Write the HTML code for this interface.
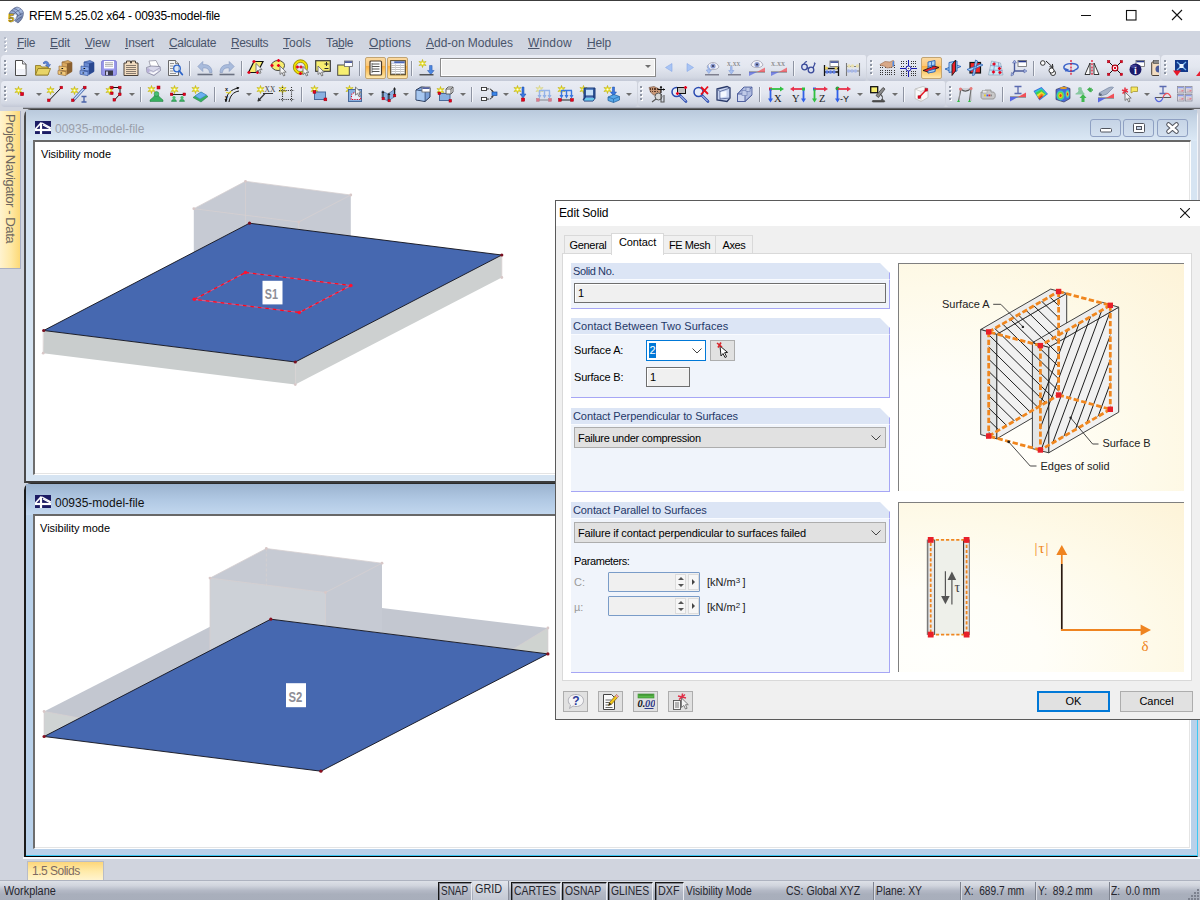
<!DOCTYPE html>
<html lang="en">
<head>
<meta charset="utf-8">
<title>RFEM 5.25.02 x64 - 00935-model-file</title>
<style>
*{box-sizing:border-box;margin:0;padding:0}
html,body{width:1200px;height:900px;overflow:hidden}
body{position:relative;background:#d0d4de;font-family:"Liberation Sans",sans-serif;font-size:12px;color:#000}
.abs{position:absolute}
#topline{left:0;top:0;width:1200px;height:1px;background:#3c3c3c}
#titlebar{left:0;top:1px;width:1200px;height:30px;background:#fff}
#titletext{left:29px;top:8px;font-size:12px;line-height:14px;white-space:nowrap;color:#000;letter-spacing:-.26px}
#menubar{left:0;top:31px;width:1200px;height:24px;background:#d0d5e0}
.mi{position:absolute;top:5px;font-size:12px;line-height:14px;color:#49546a;white-space:nowrap}
.mi u{text-decoration:underline;text-underline-offset:1px}
.tb{position:absolute;height:26px;border-radius:4px 2px 2px 4px;background:linear-gradient(#e9ecf4 0,#e3e7f0 45%,#d3d8e3 85%,#c3c8d6 100%)}
.grip{position:absolute;width:3px}
.grip i{display:block;width:2px;height:2px;background:#8e95a3;margin-bottom:2px;box-shadow:1px 1px 0 #fff}
#mdi{left:0;top:107px;width:1200px;height:750px;background:#d0d4de}
#mditop{left:23px;top:107px;width:1177px;height:2px;background:linear-gradient(#aeb2bd 0,#aeb2bd 50%,#626468 50%,#626468 100%)}
#sidetab{left:0;top:111px;width:21px;height:158px;background:linear-gradient(90deg,#fff3cf,#ffe9a6 55%,#fdd977);border-right:1px solid #aab0c4;border-bottom:1px solid #aab0c4}
#sidetab span{position:absolute;left:17px;top:3px;transform-origin:0 0;transform:rotate(90deg);white-space:nowrap;font-size:13.2px;line-height:14px;color:#6d6660;letter-spacing:-.48px}
.win{position:absolute}
.win .cap{position:absolute;left:0;top:0;right:0;height:31px}
.win .wtitle{position:absolute;left:29px;top:12px;font-size:12px;line-height:14px;white-space:nowrap}
.win .client{position:absolute;background:#fff;border-left:2px solid #6e6e6e;border-top:2px solid #686868;border-right:1px solid #fff;border-bottom:1px solid #fff;overflow:hidden}
.win .client:after{content:"";position:absolute;right:0;bottom:0;left:0;top:0;border-right:1px solid #e4e4e4;border-bottom:1px solid #e4e4e4;pointer-events:none}
.cbtn{position:absolute;top:9px;width:31px;height:18px;border:1px solid #8fa0c2;border-radius:3px;background:linear-gradient(#c6d4e6,#d3e0ef)}
.vis{position:absolute;font-size:11px;line-height:12px;white-space:nowrap;color:#000}
#statusbar{left:0;top:880px;width:1200px;height:20px;background:linear-gradient(#dde0e7 0,#d0d4dd 25%,#b4b9c6 50%,#a9afbc 70%,#a8aebb 100%);border-top:1px solid #aeb3c0}
.st{position:absolute;top:885px;font-size:12px;line-height:13px;white-space:nowrap;color:#222}
.sbtn{position:absolute;top:882px;height:18px;border:1px solid #333;font-size:12px;line-height:15px;padding:0 2px;white-space:nowrap;color:#222;background:linear-gradient(#e4e7ed,#b5bac6)}
#btab{left:27px;top:861px;width:77px;height:19px;background:linear-gradient(#fdd67a,#ffeaa8 50%,#fff4cf);border:1px solid #b8bcc8;border-bottom:none}
#btab span{position:absolute;left:4px;top:2px;font-size:12px;line-height:14px;letter-spacing:-.5px;color:#7d6a62;white-space:nowrap}
/* dialog */
#dlg{left:555px;top:200px;width:660px;height:520px;background:#f0f0f0;border:1px solid #5a5a5a;font-size:11px}
#dlg .dtitle{position:absolute;left:0;top:0;width:100%;height:25px;background:#fff}
#dlg .dtitle span{position:absolute;left:3px;top:5px;font-size:12px;line-height:14px;letter-spacing:-.15px}
.tab{position:absolute;top:34px;height:19px;border:1px solid #d9d9d9;border-bottom:none;background:#f0f0f0;font-size:11px;line-height:18px;text-align:center;white-space:nowrap}
.tab.act{top:32px;height:22px;background:#fff;z-index:2;line-height:17px}
#tabpanel{position:absolute;left:6px;top:52px;width:630px;height:428px;background:#fff;border:1px solid #d9d9d9}
.grp{position:absolute;left:16px;width:319px}
.grp .gb{position:absolute;left:0;top:16px;right:0;bottom:0;background:#f0f4fb;border-right:1px solid #a6a6f5;border-bottom:1px solid #a6a6f5;border-top:1px solid #f9fbff}
.grp .gh{position:absolute;left:0;top:0;width:319px;height:16px;background:#dce5f5;clip-path:polygon(0 0,309px 0,319px 10px,319px 16px,0 16px);border-right:1px solid #a6a6f5}
.grp .gh span{position:absolute;left:2px;top:2px;font-size:11px;line-height:12px;color:#1f3868;white-space:nowrap}
.lbl{position:absolute;font-size:11px;line-height:12px;white-space:nowrap;color:#000}
.inp{position:absolute;border:1px solid #6e6e6e;background:#f0f0f0;font-size:11px;line-height:18px;padding-left:3px;box-shadow:inset 1px 1px 0 #fff}
.combo{position:absolute;border:1px solid #adadad;background:#e1e1e1;font-size:11px;line-height:17px;padding-left:3px;white-space:nowrap}
.btn{position:absolute;border:1px solid #adadad;background:#e1e1e1;font-size:12px;text-align:center}
.pic{position:absolute;border-left:1px solid #7f7f7f;border-top:1px solid #7f7f7f;overflow:hidden;background:radial-gradient(ellipse 125% 125% at 12% 88%,#fffffc 0,#fffef8 30%,#fefae9 62%,#fdf3d8 100%)}
.spin{position:absolute;width:92px;height:20px;border:1px solid #7a9cc8;background:#f0f0f0;border-radius:1px}
.spin .ud{position:absolute;left:66px;top:1px;width:11px;height:16px;background:#f6f6f6;border:1px solid #dcdcdc}
.spin .ud:before{content:"";position:absolute;left:2px;top:2px;border:3px solid transparent;border-top:none;border-bottom:3.5px solid #555}
.spin .ud:after{content:"";position:absolute;left:2px;top:9px;border:3px solid transparent;border-bottom:none;border-top:3.5px solid #555}
.spin .rt{position:absolute;left:79px;top:1px;width:11px;height:16px;background:#f6f6f6;border:1px solid #dcdcdc}
.spin .rt:before{content:"";position:absolute;left:3px;top:4px;border:3px solid transparent;border-right:none;border-left:3.5px solid #444}
sup{font-size:8px;line-height:0;vertical-align:3px}
.ic{position:absolute;overflow:visible}
.sep{position:absolute;width:2px;height:15px;border-left:1px solid #8e94a2;border-right:1px solid #f4f6fa}
.dd{position:absolute;width:0;height:0;border:3.500px solid transparent;border-top:3.500px solid #6e6e6e;border-bottom:none}
.hot{position:absolute;border:1px solid #c2a472;border-radius:2px;background:linear-gradient(#fbd9a0 0,#fcc878 38%,#fbb040 42%,#fdd98a 85%,#fee8b0 100%)}
.tbcombo{position:absolute;border:1px solid #8a8a8a;background:#f0f0f0;box-shadow:inset 0 0 0 1px #fff}
.stx{position:absolute;top:885px;font-size:12px;line-height:13px;white-space:pre;color:#26262e;transform-origin:0 0}
.sb{position:absolute;top:882px;height:18px;border-left:1px solid #161616;border-top:1px solid #161616;box-shadow:inset 1px 1px 0 rgba(40,40,50,.45);border-right:1px solid #e8eaf0;background:linear-gradient(#d2d6df,#b4b9c6 55%,#aab0bd)}
.sb span{position:absolute;left:2px;top:2px;font-size:12px;line-height:13px;white-space:pre;color:#26262e;transform-origin:0 0}
.ssep{position:absolute;top:882px;width:2px;height:18px;border-left:1px solid #7e838f;border-right:1px solid #d8dbe3}
.mg i{background:#b4bac8;box-shadow:1px 1px 0 #fff}
</style>
</head>
<body>
<div id="topline" class="abs"></div>
<div id="titlebar" class="abs">
  <svg class="abs" style="left:6px;top:5px" width="20" height="20" viewBox="6 6 20 20"><defs><linearGradient id="gsh" x1="0" y1="0" x2="1" y2="1"><stop offset="0" stop-color="#6a7aa8"/><stop offset=".45" stop-color="#b4c8ec"/><stop offset="1" stop-color="#4a5a88"/></linearGradient></defs><path d="M9 13.500c2-3.500 5-6 8-6.500 3 .5 5.500 2.500 6.500 5.500 0 4.500-2 8-5.500 10.500l-3.500-2.500c2.500-2 3-4 2.500-6.500z" fill="url(#gsh)" stroke="#4a587e" stroke-width=".6"/><path d="M11.500 10.500c3 .5 5.500 2.500 6.500 5.500M14 8.500c3 .8 5.800 3 6.800 6.500M12.500 15c2-2 4.500-4 8-5.500M15.500 18c1.800-1.800 4-3.500 7-4.500M15.500 21c1.800-1.800 4-3.300 6.500-4.300" fill="none" stroke="#3a4870" stroke-width=".7" opacity=".8"/><text x="8.200" y="22.300" font-family="Liberation Sans,sans-serif" font-weight="bold" font-size="11" fill="#f2c81c" stroke="#6a5608" stroke-width=".5">5</text></svg><svg class="abs" style="left:1076px;top:5px" width="112" height="20" viewBox="1076 6 112 20"><path d="M1081 15.500h10" stroke="#111" stroke-width="1"/><rect x="1126.500" y="10.500" width="9.500" height="9.500" fill="none" stroke="#111" stroke-width="1.100"/><path d="M1172 10l10 10M1182 10l-10 10" stroke="#111" stroke-width="1.100"/></svg><div id="titletext" class="abs">RFEM 5.25.02 x64 - 00935-model-file</div>
</div>
<div id="menubar" class="abs">
  <div class="grip mg" style="left:4px;top:6px"><i></i><i></i><i></i><i></i></div>
  <div class="mi" style="left:17px;letter-spacing:-0.3px"><u>F</u>ile</div>
  <div class="mi" style="left:50px;letter-spacing:-0.17px"><u>E</u>dit</div>
  <div class="mi" style="left:85px;letter-spacing:-0.2px"><u>V</u>iew</div>
  <div class="mi" style="left:125px;letter-spacing:-0.17px"><u>I</u>nsert</div>
  <div class="mi" style="left:169px;letter-spacing:-0.33px"><u>C</u>alculate</div>
  <div class="mi" style="left:231px;letter-spacing:-0.43px"><u>R</u>esults</div>
  <div class="mi" style="left:283px;letter-spacing:0px"><u>T</u>ools</div>
  <div class="mi" style="left:326px;letter-spacing:-0.33px">Ta<u>b</u>le</div>
  <div class="mi" style="left:369px;letter-spacing:0.09px"><u>O</u>ptions</div>
  <div class="mi" style="left:426px;letter-spacing:-0.03px"><u>A</u>dd-on Modules</div>
  <div class="mi" style="left:528px;letter-spacing:0.2px"><u>W</u>indow</div>
  <div class="mi" style="left:587px;letter-spacing:-0.17px"><u>H</u>elp</div>
</div>
<!--TB-->
<div class="tb" style="left:1px;top:55px;width:865px"></div>
<div class="tb" style="left:867px;top:55px;width:293px"></div>
<div class="tb" style="left:1161px;top:55px;width:60px"></div>
<div class="tb" style="left:1px;top:81px;width:636px"></div>
<div class="tb" style="left:638px;top:81px;width:307px"></div>
<div class="tb" style="left:946px;top:81px;width:260px"></div>
<div class="grip" style="left:4px;top:60px"><i></i><i></i><i></i><i></i></div>
<div class="grip" style="left:870px;top:60px"><i></i><i></i><i></i><i></i></div>
<div class="grip" style="left:1164px;top:60px"><i></i><i></i><i></i><i></i></div>
<div class="grip" style="left:4px;top:86px"><i></i><i></i><i></i><i></i></div>
<div class="grip" style="left:640px;top:86px"><i></i><i></i><i></i><i></i></div>
<div class="grip" style="left:949px;top:86px"><i></i><i></i><i></i><i></i></div>
<svg class="ic" style="left:13px;top:60px" width="17" height="17" viewBox="0 0 17 17"><path d="M2.500 .5h7l3.500 3.500v11.500h-10.500z" fill="#fff" stroke="#4a4a4a" stroke-width="1"/><path d="M9.500 .5v3.500h3.500" fill="#e8e8f0" stroke="#4a4a4a" stroke-width=".8"/><path d="M3.500 9v6h9v-6z" fill="#eceef6" opacity=".7"/></svg>
<svg class="ic" style="left:35px;top:60px" width="17" height="17" viewBox="0 0 17 17"><path d="M8 3c2-3 6-2 6 2l1.500-.5-2.500 3.500-2.500-3 1.500 0c0-2-2-2.500-3-1z" fill="#5a86d8" stroke="#2a4a9a" stroke-width=".5"/><path d="M.5 5.500h5l1 1.500h6.500v8h-12.500z" fill="#d9c24a" stroke="#8a7420" stroke-width=".8"/><path d="M.5 15l2.500-6.500h12.500l-2.500 6.500z" fill="#e8d466" stroke="#8a7420" stroke-width=".8"/></svg>
<svg class="ic" style="left:57px;top:60px" width="17" height="17" viewBox="0 0 17 17"><path d="M5 2l6-1.500 4 2v9l-5 3-5-2z" fill="#d9a860" stroke="#8a6030" stroke-width=".6"/><path d="M5 2l5 1.500 5-1" fill="none" stroke="#8a6030" stroke-width=".5"/><path d="M10 3.500l5-1v9l-5 3z" fill="#8a6030"/><path d="M2 6l8 1v4l-8-1z" fill="#f2c878" stroke="#8a6030" stroke-width=".6"/><path d="M1 10.500l8 1.200v4l-8-1.500z" fill="#f2c878" stroke="#8a6030" stroke-width=".6"/><rect x="4.500" y="8" width="1.600" height="1" fill="#111"/><rect x="3.500" y="12.500" width="1.600" height="1" fill="#111"/></svg>
<svg class="ic" style="left:79px;top:60px" width="17" height="17" viewBox="0 0 17 17"><path d="M5 2l6-1.500 4 2v9l-5 3-5-2z" fill="#6a8ad0" stroke="#2a4890" stroke-width=".6"/><path d="M5 2l5 1.500 5-1" fill="none" stroke="#2a4890" stroke-width=".5"/><path d="M10 3.500l5-1v9l-5 3z" fill="#2a4890"/><path d="M2 6l8 1v4l-8-1z" fill="#88a8e8" stroke="#2a4890" stroke-width=".6"/><path d="M1 10.500l8 1.200v4l-8-1.500z" fill="#88a8e8" stroke="#2a4890" stroke-width=".6"/><rect x="4.500" y="8" width="1.600" height="1" fill="#111"/><rect x="3.500" y="12.500" width="1.600" height="1" fill="#111"/></svg>
<svg class="ic" style="left:101px;top:60px" width="17" height="17" viewBox="0 0 17 17"><rect x=".7" y=".7" width="14.600" height="14.600" rx="1.200" fill="#9a9aec" stroke="#7a7ad0" stroke-width="1"/><rect x="3" y="1" width="10" height="7.500" fill="#fff"/><path d="M4 2.800h8M4 4.500h8M4 6.200h8" stroke="#9a9a9a" stroke-width=".8"/><rect x="4" y="10.500" width="8" height="5" fill="#3a3a4a"/><rect x="5" y="11.500" width="2" height="3.500" fill="#c8c8e8"/></svg>
<svg class="ic" style="left:123px;top:60px" width="17" height="17" viewBox="0 0 17 17"><path d="M1 3h2.500v-2h4v2h1v-2h4v2h2.500v12.500h-14z" fill="#f2dcc0" stroke="#4a4038" stroke-width="1"/><path d="M3 5.500h10M3 7.500h10M3 9.500h10M3 11.500h10M3 13.500h10" stroke="#6a6058" stroke-width=".8"/></svg>
<svg class="ic" style="left:145px;top:60px" width="17" height="17" viewBox="0 0 17 17"><path d="M4 1l7-.5 3 6-8 1.500z" fill="#fff" stroke="#8a8a9a" stroke-width=".7"/><path d="M1.500 7.500l4.500-1.500 9 .5 .5 4-6.500 5-7-3z" fill="#d8d8ea" stroke="#7a7a92" stroke-width=".7"/><path d="M2 9l6.500 2.500 7-4" fill="none" stroke="#9a9ab4" stroke-width=".7"/><path d="M5.500 12.500l3 1 4-2.500" fill="none" stroke="#fff" stroke-width="1.200"/><ellipse cx="3.200" cy="10.500" rx="1.400" ry="2.200" fill="#b8b0d8"/></svg>
<svg class="ic" style="left:167px;top:60px" width="17" height="17" viewBox="0 0 17 17"><path d="M1.500 .5h7l3 3v12h-10z" fill="#f4f4f4" stroke="#5a5a5a" stroke-width=".9"/><path d="M8.500 .5v3h3" fill="#ddd" stroke="#5a5a5a" stroke-width=".7"/><path d="M3 3.500h4M3 6h3.500M3 8.500h3M3 11h3.500M3 13.500h6" stroke="#8a8a8a" stroke-width=".9"/><circle cx="10" cy="8.500" r="3.300" fill="#cfe0f8" fill-opacity=".75" stroke="#2a62c8" stroke-width="1.300"/><path d="M12.300 11l3 3.500" stroke="#2a62c8" stroke-width="1.800" stroke-linecap="round"/></svg>
<i class="sep" style="left:189px;top:61px"></i>
<svg class="ic" style="left:197px;top:60px" width="17" height="17" viewBox="0 0 17 17"><path d="M.8 6.500l5-5v3.200c5.500-.8 9.200 2.300 9.200 7.800h-2.500c-.3-3.500-2.700-5-6.700-4.500v3.500z" fill="#a8bbdc" stroke="#8497bd" stroke-width=".6"/><path d="M.5 14.500h15" stroke="#6a7080" stroke-width="1.600"/></svg>
<svg class="ic" style="left:219px;top:60px" width="17" height="17" viewBox="0 0 17 17"><path d="M15.200 6.500l-5-5v3.200c-5.500-.8-9.200 2.300-9.200 7.800h2.500c.3-3.500 2.700-5 6.700-4.500v3.500z" fill="#a8bbdc" stroke="#8497bd" stroke-width=".6"/><path d="M.5 14.500h15" stroke="#6a7080" stroke-width="1.600"/></svg>
<i class="sep" style="left:241px;top:61px"></i>
<svg class="ic" style="left:248px;top:60px" width="17" height="17" viewBox="0 0 17 17"><path d="M6 1.500h9l-5.500 11h-9z" fill="#f7ee70" stroke="#111" stroke-width="1.200"/><path d="M4.4 1.5h3.200M6 -0.10000000000000009v3.200" stroke="#e8001c" stroke-width="1.400"/><path d="M-0.6000000000000001 12.5h3.200M1 10.9v3.200" stroke="#e8001c" stroke-width="1.400"/><path d="M7.9 12.5h3.200M9.5 10.9v3.200" stroke="#e8001c" stroke-width="1.400"/><polygon points="8.0,3.5 8.0,12.0 10.1,10.1 11.6,13.5 13.0,12.8 11.6,9.6 14.2,9.6" fill="#f4f4f4" stroke="#707070" stroke-width=".9" stroke-linejoin="round"/></svg>
<svg class="ic" style="left:271px;top:60px" width="17" height="17" viewBox="0 0 17 17"><ellipse cx="7" cy="5.500" rx="6.500" ry="5" fill="#f7ee70" stroke="#333" stroke-width=".9"/><path d="M5.9 0.5h3.200M7.5 -1.1v3.200" stroke="#e8001c" stroke-width="1.400"/><path d="M-0.6000000000000001 5.5h3.200M1 3.9v3.200" stroke="#e8001c" stroke-width="1.400"/><path d="M5.9 5.5h3.200M7.5 3.9v3.200" stroke="#e8001c" stroke-width="1.400"/><polygon points="9.0,6.0 9.0,14.5 11.1,12.6 12.6,16.0 14.0,15.3 12.6,12.1 15.2,12.1" fill="#f4f4f4" stroke="#707070" stroke-width=".9" stroke-linejoin="round"/></svg>
<svg class="ic" style="left:293px;top:60px" width="17" height="17" viewBox="0 0 17 17"><circle cx="7.500" cy="7" r="6" fill="none" stroke="#f0e000" stroke-width="2.800"/><circle cx="7.500" cy="7" r="7.200" fill="none" stroke="#6a6000" stroke-width=".6"/><circle cx="7.500" cy="7" r="4.600" fill="none" stroke="#6a6000" stroke-width=".6"/><path d="M2.9 7h3.200M4.5 5.4v3.200" stroke="#e8001c" stroke-width="1.400"/><path d="M6.4 7h3.200M8 5.4v3.200" stroke="#e8001c" stroke-width="1.400"/><path d="M5.9 13.5h3.200M7.5 11.9v3.200" stroke="#e8001c" stroke-width="1.400"/><polygon points="10.0,6.5 10.0,14.6 12.0,12.8 13.4,16.0 14.8,15.3 13.4,12.3 15.9,12.3" fill="#f4f4f4" stroke="#707070" stroke-width=".9" stroke-linejoin="round"/></svg>
<svg class="ic" style="left:315px;top:60px" width="17" height="17" viewBox="0 0 17 17"><rect x=".7" y=".7" width="14.600" height="10.600" fill="#f7ee70" stroke="#3a3a3a" stroke-width="1.200"/><path d="M9.500 4h4M11.500 2v4M9.500 8.500h4" stroke="#2a2a2a" stroke-width="1"/><polygon points="3.0,6.0 3.0,14.5 5.1,12.6 6.6,16.0 8.0,15.3 6.6,12.1 9.2,12.1" fill="#f4f4f4" stroke="#707070" stroke-width=".9" stroke-linejoin="round"/></svg>
<svg class="ic" style="left:337px;top:60px" width="17" height="17" viewBox="0 0 17 17"><rect x=".7" y="5" width="11.600" height="10.300" fill="#f7ee70" stroke="#4a4a4a" stroke-width="1"/><rect x="7.5" y="1" width="8" height="5.5" fill="#fff" stroke="#6a6a6a" stroke-width=".8"/><rect x="7.9" y="1.4" width="7.2" height="1.4" fill="#26388a"/></svg>
<i class="sep" style="left:359px;top:61px"></i>
<i class="hot" style="left:365px;top:57px;width:21px;height:22px"></i>
<i class="hot" style="left:387px;top:57px;width:21px;height:22px"></i>
<svg class="ic" style="left:369px;top:60px" width="17" height="17" viewBox="0 0 17 17"><rect x="1" y="1" width="11.500" height="14" rx="1" fill="#fff" stroke="#4a3a2a" stroke-width="1.200"/><path d="M3 4h7.500M3 6.500h7.500M3 9h7.500M3 11.500h7.500" stroke="#555" stroke-width="1"/><path d="M3 3v10" stroke="#555" stroke-width=".8"/></svg>
<svg class="ic" style="left:390px;top:60px" width="17" height="17" viewBox="0 0 17 17"><rect x=".7" y=".7" width="14.600" height="14" fill="#fff" stroke="#5a4a2a" stroke-width="1.200"/><rect x="1.300" y="1.300" width="13.400" height="2" fill="#4a68b8"/><rect x="1.300" y="1.300" width="3" height="1.500" fill="#fff"/><path d="M1 5.500h14M1 7.500h14M1 9.500h14M1 11.500h14M1 13.500h14" stroke="#b0b0b0" stroke-width=".8"/><path d="M5.500 3.500v11M10.500 3.500v11" stroke="#d0d0d0" stroke-width=".8"/></svg>
<i class="sep" style="left:411px;top:61px"></i>
<svg class="ic" style="left:419px;top:60px" width="17" height="17" viewBox="0 0 17 17"><polygon points="3.5,-0.5 4.3,2.1 7.0,1.5 5.1,3.5 7.0,5.5 4.3,4.9 3.5,7.5 2.7,4.9 0.0,5.5 1.9,3.5 0.0,1.5 2.7,2.1" fill="#f7f22a" stroke="#b9a800" stroke-width=".6"/><circle cx="3.5" cy="3.5" r="1.1" fill="#fffde0"/><path d="M10.500 5.500h2.600v5h2l-3.300 4-3.300-4h2z" fill="#4a86e0" stroke="#2a56b0" stroke-width=".5"/><path d="M.5 14.800h14" stroke="#333" stroke-width="1.200"/></svg>
<div class="tbcombo" style="left:440px;top:58px;width:216px;height:19px"><i class="dd" style="left:204px;top:6px"></i></div>
<svg class="ic" style="left:665px;top:63px" width="9" height="10" viewBox="0 0 9 10"><path d="M7 .5v8l-6.500-4z" fill="#a8c4f4" stroke="#88a8e8" stroke-width=".6"/></svg>
<svg class="ic" style="left:686px;top:63px" width="9" height="10" viewBox="0 0 9 10"><path d="M1 .5v8l6.500-4z" fill="#a8c4f4" stroke="#88a8e8" stroke-width=".6"/></svg>
<svg class="ic" style="left:704px;top:60px" width="17" height="17" viewBox="0 0 17 17"><path d="M3 7c2-6 10-6 12 0-2 3.500-10 3.500-12 0z" fill="#f4f4fa" stroke="#a0a0b0" stroke-width=".8"/><circle cx="9" cy="6" r="2.600" fill="#8a9ad0"/><circle cx="9" cy="6" r="1.100" fill="#3a3a5a"/><path d="M4 5v5h-1.800l2.600 3.500 2.600-3.500h-1.800v-2" fill="#a8c0f0" stroke="#7a98d8" stroke-width=".5"/><path d="M1 14.800h14" stroke="#6a6a7a" stroke-width="1.200"/></svg>
<svg class="ic" style="left:727px;top:60px" width="17" height="17" viewBox="0 0 17 17"><text x="0" y="5.500" font-family="Liberation Serif,serif" font-size="7.500" fill="#777">x.xx</text><path d="M3.500 6.500v4h-1.800l2.600 3.500 2.600-3.500h-1.800v-4z" fill="#a8c0f0" stroke="#7a98d8" stroke-width=".5"/><path d="M1 14.800h13" stroke="#6a6a7a" stroke-width="1.200"/></svg>
<svg class="ic" style="left:749px;top:60px" width="17" height="17" viewBox="0 0 17 17"><path d="M2 5c2-6 10-6 12 0-2 3.500-10 3.500-12 0z" fill="#f4f4fa" stroke="#a0a0b0" stroke-width=".8"/><circle cx="8" cy="4.500" r="2.600" fill="#8a9ad0"/><circle cx="8" cy="4.500" r="1.100" fill="#3a3a5a"/><path d="M0 12h16" stroke="#666" stroke-width="1"/><path d="M8 12l8-4.500v4.500z" fill="#f05058" opacity=".75"/><path d="M8 12l-8 4v-4z" fill="#5868e0" opacity=".75"/></svg>
<svg class="ic" style="left:771px;top:60px" width="17" height="17" viewBox="0 0 17 17"><text x="0" y="6" font-family="Liberation Serif,serif" font-size="8" fill="#777">x.xx</text><path d="M0 12h16" stroke="#666" stroke-width="1"/><path d="M8 12l8-4.500v4.500z" fill="#f05058" opacity=".75"/><path d="M8 12l-8 4v-4z" fill="#5868e0" opacity=".75"/></svg>
<i class="sep" style="left:793px;top:61px"></i>
<svg class="ic" style="left:801px;top:60px" width="17" height="17" viewBox="0 0 17 17"><circle cx="3.500" cy="7" r="2.800" fill="#d8e0f4" fill-opacity=".6" stroke="#3a4a9a" stroke-width="1.300"/><circle cx="10" cy="10" r="2.800" fill="#d8e0f4" fill-opacity=".6" stroke="#3a4a9a" stroke-width="1.300"/><path d="M6 7.500l1.500 1.200M2.500 4.500l2-2.500 1.500-.5M12 8l2-4.500-1-.8" fill="none" stroke="#3a4a9a" stroke-width="1.200"/></svg>
<svg class="ic" style="left:823px;top:60px" width="17" height="17" viewBox="0 0 17 17"><path d="M1.500 5v11M15.500 6v10M1.500 8.500h14M1.500 12h14" stroke="#111" stroke-width="1.300" fill="none"/><circle cx="3.500" cy="8" r="1.600" fill="#e8d060"/><circle cx="4" cy="12" r="1.700" fill="#5a7ae0"/><circle cx="7.500" cy="12" r="1.700" fill="#5a7ae0"/><circle cx="11" cy="12" r="1.700" fill="#5a7ae0"/><circle cx="13" cy="8" r="1.500" fill="#e8d060"/><rect x="7" y="1" width="8.5" height="5.5" fill="#fff" stroke="#6a6a6a" stroke-width=".8"/><rect x="7.4" y="1.4" width="7.7" height="1.4" fill="#26388a"/></svg>
<svg class="ic" style="left:845px;top:60px" width="17" height="17" viewBox="0 0 17 17"><path d="M1.500 3v13M14.500 3v13M1.500 6.500h13M1.500 11h13" stroke="#7a7a7a" stroke-width="1.100" fill="none"/><circle cx="4" cy="6" r="1.700" fill="#e8e0b0"/><circle cx="7.500" cy="6" r="1.700" fill="#e8e0b0"/><circle cx="12.500" cy="6" r="1.700" fill="#e8e0b0"/><circle cx="3.500" cy="11" r="1.800" fill="#a8b8e8"/><circle cx="7" cy="11" r="1.800" fill="#a8b8e8"/><circle cx="10.500" cy="11" r="1.800" fill="#a8b8e8"/></svg>
<svg class="ic" style="left:879px;top:60px" width="17" height="17" viewBox="0 0 17 17"><rect x="1" y="5" width="1" height="1" fill="#333"/><rect x="1" y="7" width="1" height="1" fill="#333"/><rect x="1" y="10" width="1" height="1" fill="#333"/><rect x="1" y="12" width="1" height="1" fill="#333"/><rect x="1" y="14" width="1" height="1" fill="#333"/><rect x="3" y="5" width="1" height="1" fill="#333"/><rect x="3" y="7" width="1" height="1" fill="#333"/><rect x="3" y="10" width="1" height="1" fill="#333"/><rect x="3" y="12" width="1" height="1" fill="#333"/><rect x="3" y="14" width="1" height="1" fill="#333"/><rect x="6" y="5" width="1" height="1" fill="#333"/><rect x="6" y="7" width="1" height="1" fill="#333"/><rect x="6" y="10" width="1" height="1" fill="#333"/><rect x="6" y="12" width="1" height="1" fill="#333"/><rect x="6" y="14" width="1" height="1" fill="#333"/><rect x="8" y="5" width="1" height="1" fill="#333"/><rect x="8" y="7" width="1" height="1" fill="#333"/><rect x="8" y="10" width="1" height="1" fill="#333"/><rect x="8" y="12" width="1" height="1" fill="#333"/><rect x="8" y="14" width="1" height="1" fill="#333"/><rect x="10" y="5" width="1" height="1" fill="#333"/><rect x="10" y="7" width="1" height="1" fill="#333"/><rect x="10" y="10" width="1" height="1" fill="#333"/><rect x="10" y="12" width="1" height="1" fill="#333"/><rect x="10" y="14" width="1" height="1" fill="#333"/><rect x="12" y="5" width="1" height="1" fill="#333"/><rect x="12" y="7" width="1" height="1" fill="#333"/><rect x="12" y="10" width="1" height="1" fill="#333"/><rect x="12" y="12" width="1" height="1" fill="#333"/><rect x="12" y="14" width="1" height="1" fill="#333"/><rect x="15" y="5" width="1" height="1" fill="#333"/><rect x="15" y="7" width="1" height="1" fill="#333"/><rect x="15" y="10" width="1" height="1" fill="#333"/><rect x="15" y="12" width="1" height="1" fill="#333"/><rect x="15" y="14" width="1" height="1" fill="#333"/><path d="M1 4.500l5-3 5 .5 3-1.500 1 .5v5l-3 1.500-4 .5-3-2-3.500-.5z" fill="#d8a888" stroke="#9a6a4a" stroke-width=".6"/><path d="M13.500 1.500l1.500-.5v5l-1.500 .8z" fill="#4a8ae8"/></svg>
<svg class="ic" style="left:900px;top:60px" width="17" height="17" viewBox="0 0 17 17"><rect x="1" y="1" width="1" height="1" fill="#333"/><rect x="1" y="3" width="1" height="1" fill="#333"/><rect x="1" y="6" width="1" height="1" fill="#333"/><rect x="1" y="8" width="1" height="1" fill="#333"/><rect x="1" y="11" width="1" height="1" fill="#333"/><rect x="1" y="13" width="1" height="1" fill="#333"/><rect x="1" y="15" width="1" height="1" fill="#333"/><rect x="3" y="1" width="1" height="1" fill="#333"/><rect x="3" y="3" width="1" height="1" fill="#333"/><rect x="3" y="6" width="1" height="1" fill="#333"/><rect x="3" y="8" width="1" height="1" fill="#333"/><rect x="3" y="11" width="1" height="1" fill="#333"/><rect x="3" y="13" width="1" height="1" fill="#333"/><rect x="3" y="15" width="1" height="1" fill="#333"/><rect x="6" y="1" width="1" height="1" fill="#333"/><rect x="6" y="3" width="1" height="1" fill="#333"/><rect x="6" y="6" width="1" height="1" fill="#333"/><rect x="6" y="8" width="1" height="1" fill="#333"/><rect x="6" y="11" width="1" height="1" fill="#333"/><rect x="6" y="13" width="1" height="1" fill="#333"/><rect x="6" y="15" width="1" height="1" fill="#333"/><rect x="8" y="1" width="1" height="1" fill="#333"/><rect x="8" y="3" width="1" height="1" fill="#333"/><rect x="8" y="6" width="1" height="1" fill="#333"/><rect x="8" y="8" width="1" height="1" fill="#333"/><rect x="8" y="11" width="1" height="1" fill="#333"/><rect x="8" y="13" width="1" height="1" fill="#333"/><rect x="8" y="15" width="1" height="1" fill="#333"/><rect x="11" y="1" width="1" height="1" fill="#333"/><rect x="11" y="3" width="1" height="1" fill="#333"/><rect x="11" y="6" width="1" height="1" fill="#333"/><rect x="11" y="8" width="1" height="1" fill="#333"/><rect x="11" y="11" width="1" height="1" fill="#333"/><rect x="11" y="13" width="1" height="1" fill="#333"/><rect x="11" y="15" width="1" height="1" fill="#333"/><rect x="13" y="1" width="1" height="1" fill="#333"/><rect x="13" y="3" width="1" height="1" fill="#333"/><rect x="13" y="6" width="1" height="1" fill="#333"/><rect x="13" y="8" width="1" height="1" fill="#333"/><rect x="13" y="11" width="1" height="1" fill="#333"/><rect x="13" y="13" width="1" height="1" fill="#333"/><rect x="13" y="15" width="1" height="1" fill="#333"/><rect x="15" y="1" width="1" height="1" fill="#333"/><rect x="15" y="3" width="1" height="1" fill="#333"/><rect x="15" y="6" width="1" height="1" fill="#333"/><rect x="15" y="8" width="1" height="1" fill="#333"/><rect x="15" y="11" width="1" height="1" fill="#333"/><rect x="15" y="13" width="1" height="1" fill="#333"/><rect x="15" y="15" width="1" height="1" fill="#333"/><circle cx="8.500" cy="8.500" r="2.500" fill="#fff" stroke="#1a1ab0" stroke-width="1"/><path d="M8.500 0v6M8.500 11v6M0 8.500h6M11 8.500h6" stroke="#1a1ab0" stroke-width="1"/><circle cx="8.500" cy="8.500" r=".8" fill="#555"/></svg>
<i class="hot" style="left:921px;top:57px;width:21px;height:22px"></i>
<svg class="ic" style="left:923px;top:60px" width="17" height="17" viewBox="0 0 17 17"><path d="M5 2l7-1.500v11l-7 1.500z" fill="#a8d4f8" stroke="#2a62b8" stroke-width=".9"/><path d="M0 10.500l11-4.500 5 1.500-11 4.500z" fill="#e8202a" stroke="#111" stroke-width=".8"/><path d="M8.500 1.500v6.500M5 6.500l7-1.500" stroke="#2a62b8" stroke-width=".8"/><path d="M5 13l0-2 7-2v2.500z" fill="#a8d4f8" stroke="#2a62b8" stroke-width=".8"/></svg>
<svg class="ic" style="left:945px;top:60px" width="17" height="17" viewBox="0 0 17 17"><path d="M0 9l11-4 5 1.500-11 4.500z" fill="#a8d4f8" stroke="#2a62b8" stroke-width=".9"/><path d="M4 2.500l8-1.500v10l-8 1.500z" fill="#a8d4f8" stroke="#2a62b8" stroke-width=".9"/><path d="M7 4.500l3.500-4.500v11l-3.500 4.500z" fill="#e8202a" stroke="#111" stroke-width=".8"/></svg>
<svg class="ic" style="left:967px;top:60px" width="17" height="17" viewBox="0 0 17 17"><rect x="3" y="2.500" width="10.500" height="10.500" fill="#f02828" stroke="#111" stroke-width="1.200"/><path d="M0 9.500l14-5.500 2 1-13 6zM8.500 0l2 1-3 14-2 .5z" fill="#a8d4f8" stroke="#2a62b8" stroke-width=".8"/></svg>
<svg class="ic" style="left:988px;top:60px" width="17" height="17" viewBox="0 0 17 17"><path d="M3.500 1l9 2 2.500 12h-14.500z" fill="#c8ecf8" stroke="#8a9ab0" stroke-width=".6"/><path d="M2.500 5.500l11.500 1M1.500 10l13 .5M7 1.800l-2 13.200M10.500 2.500l1 12.500" stroke="#7a8ac0" stroke-width=".7"/><path d="M4.4 4h3.200M6 2.4v3.200" stroke="#e8001c" stroke-width="1.400"/><path d="M3.9 12h3.200M5.5 10.4v3.200" stroke="#e8001c" stroke-width="1.400"/><path d="M9.9 8.5h3.200M11.5 6.9v3.200" stroke="#e8001c" stroke-width="1.400"/><path d="M10.4 12.5h3.200M12 10.9v3.200" stroke="#e8001c" stroke-width="1.400"/></svg>
<svg class="ic" style="left:1011px;top:60px" width="17" height="17" viewBox="0 0 17 17"><path d="M3.500 1v10l-2.500 4M3.500 11l10 0" stroke="#4a5a9a" stroke-width="1.400" fill="none"/><path d="M3.500 0l-2 3h4zM16 11l-3-2v4zM0 16l.5-3.500 2.500 2z" fill="#a8b8e8" stroke="#4a5a9a" stroke-width=".5"/><rect x="7" y="0.5" width="8.5" height="6" fill="#fff" stroke="#6a6a6a" stroke-width=".8"/><rect x="7.4" y="0.9" width="7.7" height="1.4" fill="#26388a"/></svg>
<i class="sep" style="left:1033px;top:61px"></i>
<svg class="ic" style="left:1040px;top:60px" width="17" height="17" viewBox="0 0 17 17"><circle cx="2.800" cy="3" r="2.300" fill="#fff" stroke="#222" stroke-width=".9"/><circle cx="13" cy="13" r="2.500" fill="#fff" stroke="#222" stroke-width=".9"/><circle cx="11.500" cy="10.500" r="2.500" fill="#fff" stroke="#222" stroke-width=".9"/><path d="M6 1l7 6.500M13 7.500l-3.500-.8M13 7.500l-.6-3.500" stroke="#222" stroke-width="1" fill="none"/></svg>
<svg class="ic" style="left:1063px;top:60px" width="17" height="17" viewBox="0 0 17 17"><path d="M12 10.500c-5 2-12 0-11-4 1-3.500 12-4 14-.5 .8 1.800-1 3.500-3.500 4" fill="none" stroke="#3a62c8" stroke-width="1.500"/><path d="M2 8l.5 4 3.500-2.500z" fill="#3a62c8"/><path d="M8 0v16" stroke="#e8001c" stroke-width="1.200" stroke-dasharray="2 1.200"/></svg>
<svg class="ic" style="left:1084px;top:60px" width="17" height="17" viewBox="0 0 17 17"><path d="M6 3v11.500h-5zM10 3v11.500h5z" fill="#fafafa" stroke="#222" stroke-width=".9"/><path d="M8 0v16" stroke="#e8001c" stroke-width="1.200" stroke-dasharray="2 1.200"/></svg>
<svg class="ic" style="left:1107px;top:60px" width="17" height="17" viewBox="0 0 17 17"><path d="M2 2l12 12M14 2l-12 12" stroke="#111" stroke-width="1"/><circle cx="8" cy="8" r="2.800" fill="#fff" stroke="#b00010" stroke-width="1.200"/><circle cx="8" cy="8" r="1.200" fill="#e8001c"/><rect x="0.5" y="0.5" width="2.3" height="2.3" fill="#e8001c" stroke="#9a0010" stroke-width=".5"/><rect x="13.2" y="0.5" width="2.3" height="2.3" fill="#e8001c" stroke="#9a0010" stroke-width=".5"/><rect x="0.5" y="13.2" width="2.3" height="2.3" fill="#e8001c" stroke="#9a0010" stroke-width=".5"/><rect x="13.2" y="13.2" width="2.3" height="2.3" fill="#e8001c" stroke="#9a0010" stroke-width=".5"/></svg>
<svg class="ic" style="left:1129px;top:60px" width="17" height="17" viewBox="0 0 17 17"><rect x="7" y="0.5" width="8.5" height="6" fill="#fff" stroke="#6a6a6a" stroke-width=".8"/><rect x="7.4" y="0.9" width="7.7" height="1.4" fill="#26388a"/><circle cx="6.500" cy="9.500" r="6" fill="#1a1a6a"/><ellipse cx="5" cy="6.500" rx="3" ry="1.800" fill="#5a5ab0" opacity=".6"/><text x="6.500" y="13.500" text-anchor="middle" font-family="Liberation Serif,serif" font-weight="bold" font-size="10" fill="#fff">i</text></svg>
<svg class="ic" style="left:1151px;top:60px;overflow:hidden" width="8" height="17" viewBox="0 0 8 17"><rect x=".7" y="2" width="10" height="13.500" rx="1" fill="#f2dcc0" stroke="#4a4038" stroke-width="1"/><rect x="2.500" y=".5" width="6" height="3" fill="#8a8a8a" stroke="#444" stroke-width=".6"/><circle cx="8" cy="9" r="3.500" fill="#4a5a9a"/></svg>
<svg class="ic" style="left:1173px;top:60px" width="17" height="17" viewBox="0 0 17 17"><rect x="2" y="0" width="13" height="12" fill="#12388a"/><path d="M4 2l9 8M13 2l-9 8" stroke="#7ab8f0" stroke-width="1.300"/><rect x="6.500" y="4" width="4" height="4" fill="#e8f4ff"/><path d="M0 10.500h8l-4 5.500z" fill="#e81828"/></svg>
<i style="position:absolute;left:1196px;top:71px;border:4px solid transparent;border-bottom:5px solid #e82030;border-top:none"></i>
<svg class="ic" style="left:15px;top:87px" width="17" height="17" viewBox="0 0 17 17"><polygon points="3.5,-0.5 4.3,2.1 7.0,1.5 5.1,3.5 7.0,5.5 4.3,4.9 3.5,7.5 2.7,4.9 0.0,5.5 1.9,3.5 0.0,1.5 2.7,2.1" fill="#f7f22a" stroke="#b9a800" stroke-width=".6"/><circle cx="3.5" cy="3.5" r="1.1" fill="#fffde0"/><rect x="5.5" y="5.5" width="3.2" height="3.2" fill="#e8001c" stroke="#9a0010" stroke-width=".5"/></svg>
<i class="dd" style="left:36px;top:93px"></i>
<svg class="ic" style="left:47px;top:86px" width="17" height="17" viewBox="0 0 17 17"><polygon points="3.5,0.5 4.3,3.1 7.0,2.5 5.1,4.5 7.0,6.5 4.3,5.9 3.5,8.5 2.7,5.9 0.0,6.5 1.9,4.5 0.0,2.5 2.7,3.1" fill="#f7f22a" stroke="#b9a800" stroke-width=".6"/><circle cx="3.5" cy="4.5" r="1.1" fill="#fffde0"/><path d="M2 14.500l12.500-13" stroke="#111" stroke-width="1"/><rect x="0.5" y="13" width="2.6" height="2.6" fill="#e8001c" stroke="#9a0010" stroke-width=".5"/><rect x="13" y="0.2" width="2.6" height="2.6" fill="#e8001c" stroke="#9a0010" stroke-width=".5"/></svg>
<svg class="ic" style="left:71px;top:86px" width="17" height="17" viewBox="0 0 17 17"><polygon points="3.5,0.5 4.3,3.1 7.0,2.5 5.1,4.5 7.0,6.5 4.3,5.9 3.5,8.5 2.7,5.9 0.0,6.5 1.9,4.5 0.0,2.5 2.7,3.1" fill="#f7f22a" stroke="#b9a800" stroke-width=".6"/><circle cx="3.5" cy="4.5" r="1.1" fill="#fffde0"/><path d="M2 14.500l12-13" stroke="#3a5aa0" stroke-width="2.600"/><path d="M2 14.500l12-13" stroke="#c8e0ff" stroke-width="1.300"/><rect x="0.5" y="13" width="2.6" height="2.6" fill="#e8001c" stroke="#9a0010" stroke-width=".5"/><rect x="12.5" y="0.2" width="2.6" height="2.6" fill="#e8001c" stroke="#9a0010" stroke-width=".5"/><path d="M10.500 10.500h5M10.500 16h5M13 10.500v5.500" stroke="#4a62a8" stroke-width="1.300"/></svg>
<i class="dd" style="left:94px;top:93px"></i>
<svg class="ic" style="left:106px;top:86px" width="17" height="17" viewBox="0 0 17 17"><polygon points="3.5,0.5 4.3,3.1 7.0,2.5 5.1,4.5 7.0,6.5 4.3,5.9 3.5,8.5 2.7,5.9 0.0,6.5 1.9,4.5 0.0,2.5 2.7,3.1" fill="#f7f22a" stroke="#b9a800" stroke-width=".6"/><circle cx="3.5" cy="4.5" r="1.1" fill="#fffde0"/><path d="M6 1.500h8v6.500l-5.500 6" fill="none" stroke="#111" stroke-width="1"/><rect x="4.5" y="0.2" width="2.6" height="2.6" fill="#e8001c" stroke="#9a0010" stroke-width=".5"/><rect x="12.5" y="0.2" width="2.6" height="2.6" fill="#e8001c" stroke="#9a0010" stroke-width=".5"/><rect x="4.5" y="6" width="2.6" height="2.6" fill="#e8001c" stroke="#9a0010" stroke-width=".5"/><rect x="12.5" y="7" width="2.6" height="2.6" fill="#e8001c" stroke="#9a0010" stroke-width=".5"/><rect x="7" y="12.5" width="2.6" height="2.6" fill="#e8001c" stroke="#9a0010" stroke-width=".5"/></svg>
<i class="dd" style="left:129px;top:93px"></i>
<i class="sep" style="left:140px;top:87px"></i>
<svg class="ic" style="left:148px;top:86px" width="17" height="17" viewBox="0 0 17 17"><polygon points="3.5,-0.5 4.3,2.1 7.0,1.5 5.1,3.5 7.0,5.5 4.3,4.9 3.5,7.5 2.7,4.9 0.0,5.5 1.9,3.5 0.0,1.5 2.7,2.1" fill="#f7f22a" stroke="#b9a800" stroke-width=".6"/><circle cx="3.5" cy="3.5" r="1.1" fill="#fffde0"/><rect x="9" y="0" width="3" height="3" fill="#e8001c" stroke="#9a0010" stroke-width=".5"/><path d="M6 10.500c0-2 5-2 5 0l4 3.500v1.500h-13v-1.500z" fill="#38b060" stroke="#1a7a3a" stroke-width=".5"/><circle cx="8.500" cy="8" r="2.400" fill="#48c070" stroke="#1a7a3a" stroke-width=".5"/></svg>
<svg class="ic" style="left:170px;top:86px" width="17" height="17" viewBox="0 0 17 17"><polygon points="4.5,-0.5 5.3,2.1 8.0,1.5 6.1,3.5 8.0,5.5 5.3,4.9 4.5,7.5 3.7,4.9 1.0,5.5 2.9,3.5 1.0,1.5 3.7,2.1" fill="#f7f22a" stroke="#b9a800" stroke-width=".6"/><circle cx="4.5" cy="3.5" r="1.1" fill="#fffde0"/><path d="M2 8.500h12" stroke="#222" stroke-width="1"/><rect x="0.3" y="7" width="2.6" height="2.6" fill="#e8001c" stroke="#9a0010" stroke-width=".5"/><rect x="13" y="7" width="2.6" height="2.6" fill="#e8001c" stroke="#9a0010" stroke-width=".5"/><circle cx="4" cy="11.500" r="1.600" fill="#48c070"/><circle cx="12" cy="11.500" r="1.600" fill="#48c070"/><path d="M1.500 15.500c0-3 5-3 5 0zM9.500 15.500c0-3 5-3 5 0z" fill="#38b060" stroke="#1a7a3a" stroke-width=".4"/></svg>
<svg class="ic" style="left:192px;top:86px" width="17" height="17" viewBox="0 0 17 17"><polygon points="3.5,-0.5 4.3,2.1 7.0,1.5 5.1,3.5 7.0,5.5 4.3,4.9 3.5,7.5 2.7,4.9 0.0,5.5 1.9,3.5 0.0,1.5 2.7,2.1" fill="#f7f22a" stroke="#b9a800" stroke-width=".6"/><circle cx="3.5" cy="3.5" r="1.1" fill="#fffde0"/><path d="M1 11.500l8-5.500 7 4.500-7 5.500z" fill="#38b060" stroke="#1a7a3a" stroke-width=".5"/><path d="M3 10l6-4 5.500 3-6.500 4z" fill="#6ab0f0" stroke="#3a7ac8" stroke-width=".5"/></svg>
<i class="sep" style="left:214px;top:87px"></i>
<svg class="ic" style="left:224px;top:86px" width="17" height="17" viewBox="0 0 17 17"><path d="M2 16c0-8 5-13 13-14M5 16c1-6 4-10 10-11" fill="none" stroke="#111" stroke-width="1"/><path d="M15.500 1.500l-3-.8 .5 2.800zM1.500 16l-.8-3 2.800 .5z" fill="#111"/><text x="1" y="5" font-family="Liberation Sans,sans-serif" font-weight="bold" font-size="5.500" fill="#111">x</text><text x="1" y="13" font-family="Liberation Sans,sans-serif" font-weight="bold" font-size="5.500" fill="#111">y</text><path d="M2 6.500l4 .5 1-2" stroke="#e8d820" stroke-width="1.200" fill="none"/></svg>
<i class="dd" style="left:246px;top:93px"></i>
<svg class="ic" style="left:257px;top:86px" width="17" height="17" viewBox="0 0 17 17"><polygon points="3.5,-0.5 4.3,2.1 7.0,1.5 5.1,3.5 7.0,5.5 4.3,4.9 3.5,7.5 2.7,4.9 0.0,5.5 1.9,3.5 0.0,1.5 2.7,2.1" fill="#f7f22a" stroke="#b9a800" stroke-width=".6"/><circle cx="3.5" cy="3.5" r="1.1" fill="#fffde0"/><text x="7.500" y="6" font-family="Liberation Serif,serif" font-size="7.500" fill="#444">XX</text><path d="M6 7.500h10M8 7.500l-7 7.500" stroke="#333" stroke-width="1.100" fill="none"/><path d="M.5 15.500l.8-4 3 3z" fill="#333"/></svg>
<svg class="ic" style="left:279px;top:86px" width="17" height="17" viewBox="0 0 17 17"><polygon points="3.5,-0.5 4.3,2.1 7.0,1.5 5.1,3.5 7.0,5.5 4.3,4.9 3.5,7.5 2.7,4.9 0.0,5.5 1.9,3.5 0.0,1.5 2.7,2.1" fill="#f7f22a" stroke="#b9a800" stroke-width=".6"/><circle cx="3.5" cy="3.5" r="1.1" fill="#fffde0"/><path d="M0 4.500h15.500M0 13.500h15.500M3.500 1v15M12.500 1v15" stroke="#333" stroke-width="1.100" stroke-dasharray="1.100 1.100" fill="none"/></svg>
<i class="sep" style="left:301px;top:87px"></i>
<svg class="ic" style="left:311px;top:86px" width="17" height="17" viewBox="0 0 17 17"><polygon points="3.5,-0.5 4.3,2.1 7.0,1.5 5.1,3.5 7.0,5.5 4.3,4.9 3.5,7.5 2.7,4.9 0.0,5.5 1.9,3.5 0.0,1.5 2.7,2.1" fill="#f7f22a" stroke="#b9a800" stroke-width=".6"/><circle cx="3.5" cy="3.5" r="1.1" fill="#fffde0"/><rect x="3.500" y="6" width="11" height="7.500" fill="#8ab0e0" stroke="#4a6a9a" stroke-width="1"/><rect x="2" y="4.5" width="2.8" height="2.8" fill="#e8001c" stroke="#9a0010" stroke-width=".5"/><rect x="13" y="12" width="2.8" height="2.8" fill="#e8001c" stroke="#9a0010" stroke-width=".5"/></svg>
<i class="dd" style="left:333px;top:93px"></i>
<svg class="ic" style="left:346px;top:86px" width="17" height="17" viewBox="0 0 17 17"><polygon points="3.5,-0.5 4.3,2.1 7.0,1.5 5.1,3.5 7.0,5.5 4.3,4.9 3.5,7.5 2.7,4.9 0.0,5.5 1.9,3.5 0.0,1.5 2.7,2.1" fill="#f7f22a" stroke="#b9a800" stroke-width=".6"/><circle cx="3.5" cy="3.5" r="1.1" fill="#fffde0"/><rect x="2.500" y="3.500" width="13" height="12" fill="#8ab0e0" stroke="#4a6a9a" stroke-width="1"/><path d="M5 13.500l1-6 6-2 3 8z" fill="#e8eef8" stroke="#e8001c" stroke-width="1" stroke-dasharray="1.200 1.200"/><polygon points="9.5,1.0 9.5,9.1 11.5,7.3 12.9,10.5 14.3,9.8 12.9,6.8 15.4,6.8" fill="#f4f4f4" stroke="#707070" stroke-width=".9" stroke-linejoin="round"/></svg>
<i class="dd" style="left:368px;top:93px"></i>
<svg class="ic" style="left:381px;top:86px" width="17" height="17" viewBox="0 0 17 17"><path d="M1 5l6 3v7l-6-3zM7 8l7-5v7.500l-7 4.500z" fill="#8ab0e0" stroke="#4a6a9a" stroke-width=".7"/><path d="M2 12.500v-6M8 14.500v-6M13.500 9v-6" stroke="#222" stroke-width="1.100"/><path d="M2 4.500l-1.500 2.500h3zM8 6.500l-1.500 2.500h3zM13.500 1l-1.500 2.500h3z" fill="#222"/><rect x="1" y="11.5" width="2.3" height="2.3" fill="#e8001c" stroke="#9a0010" stroke-width=".5"/><rect x="7" y="13.5" width="2.3" height="2.3" fill="#e8001c" stroke="#9a0010" stroke-width=".5"/><rect x="12.5" y="8.5" width="2.3" height="2.3" fill="#e8001c" stroke="#9a0010" stroke-width=".5"/></svg>
<i class="dd" style="left:403px;top:93px"></i>
<svg class="ic" style="left:415px;top:86px" width="17" height="17" viewBox="0 0 17 17"><path d="M1 4l5-3 9 1v9l-5 4.500-9-1.500z" fill="#7aa0d8" stroke="#2a3a5a" stroke-width="1"/><path d="M1 4l9 1.500 5-3.500M10 5.500v10" fill="none" stroke="#2a3a5a" stroke-width=".8"/><path d="M1.500 4.500l8 1.300v9l-8-1.300z" fill="#a8c8f0"/><rect x="7" y="1" width="8" height="5" fill="#fff" stroke="#6a6a6a" stroke-width=".8"/><rect x="7.4" y="1.4" width="7.2" height="1.4" fill="#26388a"/></svg>
<svg class="ic" style="left:437px;top:86px" width="17" height="17" viewBox="0 0 17 17"><polygon points="3.5,0.5 4.3,3.1 7.0,2.5 5.1,4.5 7.0,6.5 4.3,5.9 3.5,8.5 2.7,5.9 0.0,6.5 1.9,4.5 0.0,2.5 2.7,3.1" fill="#f7f22a" stroke="#b9a800" stroke-width=".6"/><circle cx="3.5" cy="4.5" r="1.1" fill="#fffde0"/><rect x="2.500" y="7.500" width="10.500" height="7" fill="#8ab0e0" stroke="#4a6a9a" stroke-width="1"/><path d="M9 3l2-2h5v5l-2 2h-5zM9 3h5v5M14 3l2-2" fill="#f4f4f4" stroke="#555" stroke-width=".9"/><rect x="1" y="6" width="2.6" height="2.6" fill="#e8001c" stroke="#9a0010" stroke-width=".5"/><rect x="12" y="13.5" width="2.6" height="2.6" fill="#e8001c" stroke="#9a0010" stroke-width=".5"/></svg>
<i class="dd" style="left:460px;top:93px"></i>
<i class="sep" style="left:471px;top:87px"></i>
<svg class="ic" style="left:481px;top:86px" width="17" height="17" viewBox="0 0 17 17"><rect x=".5" y="1.500" width="5" height="3" fill="#fff" stroke="#333" stroke-width=".9"/><rect x=".5" y="11.500" width="5" height="3" fill="#fff" stroke="#333" stroke-width=".9"/><rect x="11" y="6" width="5" height="3.500" fill="#3a86e8" stroke="#1a4a9a" stroke-width=".7"/><path d="M5.500 3c4-.5 6 .5 6.500 3M5.500 13c4 .5 6-.5 6.500-3" fill="none" stroke="#333" stroke-width="1" stroke-dasharray="2 1"/><path d="M12.500 6l-2.500-1 .5-1.500zM12.500 9.500l-2.500 1 .5 1.500z" fill="#333"/></svg>
<i class="dd" style="left:503px;top:93px"></i>
<svg class="ic" style="left:514px;top:86px" width="17" height="17" viewBox="0 0 17 17"><polygon points="3.5,-0.5 4.3,2.1 7.0,1.5 5.1,3.5 7.0,5.5 4.3,4.9 3.5,7.5 2.7,4.9 0.0,5.5 1.9,3.5 0.0,1.5 2.7,2.1" fill="#f7f22a" stroke="#b9a800" stroke-width=".6"/><circle cx="3.5" cy="3.5" r="1.1" fill="#fffde0"/><path d="M8 1h2v7h2l-3 4-3-4h2z" fill="#3a78e0" stroke="#1a4aa8" stroke-width=".5"/><rect x="7.5" y="12" width="3.2" height="3.2" fill="#e8001c" stroke="#9a0010" stroke-width=".5"/></svg>
<svg class="ic" style="left:536px;top:86px" width="17" height="17" viewBox="0 0 17 17"><g opacity="0.45"><polygon points="3.5,-0.5 4.3,2.1 7.0,1.5 5.1,3.5 7.0,5.5 4.3,4.9 3.5,7.5 2.7,4.9 0.0,5.5 1.9,3.5 0.0,1.5 2.7,2.1" fill="#f7f22a" stroke="#b9a800" stroke-width=".6"/><circle cx="3.5" cy="3.5" r="1.1" fill="#fffde0"/><path d="M3 4.500h11M3.500 4.500v6M8.500 4.500v6M13.500 4.500v6" stroke="#3a78e0" stroke-width="1.400" fill="none"/><path d="M1.500 9l2 3.500 2-3.500zM6.500 9l2 3.500 2-3.500zM11.500 9l2 3.500 2-3.500z" fill="#3a78e0"/><path d="M2 14h12" stroke="#222" stroke-width="1"/><rect x="0.5" y="12.5" width="2.8" height="2.8" fill="#e8001c" stroke="#9a0010" stroke-width=".5"/><rect x="12.7" y="12.5" width="2.8" height="2.8" fill="#e8001c" stroke="#9a0010" stroke-width=".5"/></g></svg>
<svg class="ic" style="left:558px;top:86px" width="17" height="17" viewBox="0 0 17 17"><g opacity="1"><polygon points="3.5,-0.5 4.3,2.1 7.0,1.5 5.1,3.5 7.0,5.5 4.3,4.9 3.5,7.5 2.7,4.9 0.0,5.5 1.9,3.5 0.0,1.5 2.7,2.1" fill="#f7f22a" stroke="#b9a800" stroke-width=".6"/><circle cx="3.5" cy="3.5" r="1.1" fill="#fffde0"/><path d="M3 4.500h11M3.500 4.500v6M8.500 4.500v6M13.500 4.500v6" stroke="#3a78e0" stroke-width="1.400" fill="none"/><path d="M1.500 9l2 3.500 2-3.500zM6.500 9l2 3.500 2-3.500zM11.500 9l2 3.500 2-3.500z" fill="#3a78e0"/><path d="M2 14h12" stroke="#222" stroke-width="1"/><rect x="0.5" y="12.5" width="2.8" height="2.8" fill="#e8001c" stroke="#9a0010" stroke-width=".5"/><rect x="12.7" y="12.5" width="2.8" height="2.8" fill="#e8001c" stroke="#9a0010" stroke-width=".5"/></g></svg>
<svg class="ic" style="left:580px;top:86px" width="17" height="17" viewBox="0 0 17 17"><polygon points="3.5,-0.5 4.3,2.1 7.0,1.5 5.1,3.5 7.0,5.5 4.3,4.9 3.5,7.5 2.7,4.9 0.0,5.5 1.9,3.5 0.0,1.5 2.7,2.1" fill="#f7f22a" stroke="#b9a800" stroke-width=".6"/><circle cx="3.5" cy="3.5" r="1.1" fill="#fffde0"/><path d="M4 2h11v10l-2 3h-9z" fill="#5a86c8" stroke="#1a3a7a" stroke-width="1"/><path d="M6 4h7v6h-7z" fill="#c8e0f8"/><path d="M5 2v11M14 2v10M3 14l3-4h7l2 3" stroke="#1a3a7a" stroke-width="1.200" fill="none"/><path d="M4 14.500h9l1.500-2.500h-9z" fill="#6ac8e8"/></svg>
<svg class="ic" style="left:604px;top:86px" width="17" height="17" viewBox="0 0 17 17"><polygon points="3.5,-0.5 4.3,2.1 7.0,1.5 5.1,3.5 7.0,5.5 4.3,4.9 3.5,7.5 2.7,4.9 0.0,5.5 1.9,3.5 0.0,1.5 2.7,2.1" fill="#f7f22a" stroke="#b9a800" stroke-width=".6"/><circle cx="3.5" cy="3.5" r="1.1" fill="#fffde0"/><path d="M8.500 1h2v5h2l-3 4-3-4h2z" fill="#3a78e0" stroke="#1a4aa8" stroke-width=".5"/><path d="M4 11l6-2.500 5.500 2v3.500l-6 2.500-5.500-2z" fill="#58a8e8" stroke="#1a5a9a" stroke-width=".7"/><path d="M4 11l5.500 2 6-2.500M9.500 13v3.500" stroke="#1a5a9a" stroke-width=".6" fill="none"/></svg>
<i class="dd" style="left:626px;top:93px"></i>
<svg class="ic" style="left:649px;top:86px" width="17" height="17" viewBox="0 0 17 17"><path d="M0 1.500l5-1 7 3.500-.5 3-3 2.500-4-.5-3-3z" fill="#c89878" stroke="#6a4a3a" stroke-width=".6"/><rect x="1" y="2" width="1" height="1" fill="#5a3a2a"/><rect x="1" y="3" width="1" height="1" fill="#5a3a2a"/><rect x="1" y="5" width="1" height="1" fill="#5a3a2a"/><rect x="3" y="2" width="1" height="1" fill="#5a3a2a"/><rect x="3" y="3" width="1" height="1" fill="#5a3a2a"/><rect x="3" y="5" width="1" height="1" fill="#5a3a2a"/><rect x="5" y="2" width="1" height="1" fill="#5a3a2a"/><rect x="5" y="3" width="1" height="1" fill="#5a3a2a"/><rect x="5" y="5" width="1" height="1" fill="#5a3a2a"/><rect x="6" y="2" width="1" height="1" fill="#5a3a2a"/><rect x="6" y="3" width="1" height="1" fill="#5a3a2a"/><rect x="6" y="5" width="1" height="1" fill="#5a3a2a"/><rect x="8" y="2" width="1" height="1" fill="#5a3a2a"/><rect x="8" y="3" width="1" height="1" fill="#5a3a2a"/><rect x="8" y="5" width="1" height="1" fill="#5a3a2a"/><path d="M12 0v7M9 3.500h7" stroke="#111" stroke-width="1"/><path d="M12 0l-1.300 2h2.600zM16 3.500l-2-1.300v2.600z" fill="#111"/><circle cx="9.500" cy="10.500" r="3.500" fill="#d8d8d8" stroke="#555" stroke-width="1"/><path d="M7 13l-4 3M12 8v8h3v-7" stroke="#555" stroke-width="1.100" fill="none"/></svg>
<svg class="ic" style="left:671px;top:86px" width="17" height="17" viewBox="0 0 17 17"><circle cx="5.500" cy="6" r="4.500" fill="#e8f0fc" fill-opacity=".6" stroke="#2a4ab0" stroke-width="1.500"/><path d="M9 9.500l6 6" stroke="#2a4ab0" stroke-width="2.600" stroke-linecap="round"/><path d="M9.500 10l5 5" stroke="#e8f0ff" stroke-width="1" stroke-linecap="round"/><rect x="6.500" y="1.500" width="8" height="6" fill="#c0c0c0" stroke="#111" stroke-width="1"/><path d="M12.9 1.5h3.200M14.5 -0.10000000000000009v3.200" stroke="#e8001c" stroke-width="1.400"/><path d="M4.9 7.5h3.200M6.5 5.9v3.200" stroke="#e8001c" stroke-width="1.400"/></svg>
<svg class="ic" style="left:693px;top:86px" width="17" height="17" viewBox="0 0 17 17"><circle cx="5.500" cy="6" r="4.500" fill="#e8f0fc" fill-opacity=".6" stroke="#2a4ab0" stroke-width="1.500"/><path d="M9 9.500l6 6" stroke="#2a4ab0" stroke-width="2.600" stroke-linecap="round"/><path d="M9.500 10l5 5" stroke="#e8f0ff" stroke-width="1" stroke-linecap="round"/><path d="M8 1l7 7M15 .5l-7 8" stroke="#e8101c" stroke-width="1.800"/></svg>
<svg class="ic" style="left:715px;top:86px" width="17" height="17" viewBox="0 0 17 17"><path d="M2 3l10-2.500 3 1.500v10l-3 3.500-10-1.500z" fill="#c8d4f0" stroke="#2a3a6a" stroke-width="1.300"/><path d="M2 3l3 2.500v8M5 5.500l10-3.500M5 13l10-1" stroke="#5a6a9a" stroke-width=".9" fill="none"/><path d="M5.500 6l6-1v5.500l-6 1z" fill="#f4f8ff"/></svg>
<svg class="ic" style="left:737px;top:86px" width="17" height="17" viewBox="0 0 17 17"><path d="M7 1h8v8l-7 6.500h-7.500v-7.500z" fill="#b0bce0" stroke="#4a5a9a" stroke-width=".8"/><rect x=".5" y="8" width="7.500" height="7.500" fill="#d0d8f0" stroke="#4a5a9a" stroke-width=".9"/><path d="M.5 8l6.500-7M8 8l7-7M8 15.500l7-6.500" stroke="#4a5a9a" stroke-width=".8" fill="none"/><rect x="5" y="4.500" width="5" height="5" fill="#c0cae8" stroke="#6a7ab0" stroke-width=".6"/><rect x="9" y="1.500" width="4" height="4" fill="#c0cae8" stroke="#6a7ab0" stroke-width=".6"/></svg>
<i class="sep" style="left:759px;top:87px"></i>
<svg class="ic" style="left:768px;top:86px" width="17" height="17" viewBox="0 0 17 17"><rect x="1" y="1.500" width="3" height="3" fill="#e8202a"/><path d="M2 3h11" stroke="#30c040" stroke-width="1.800"/><path d="M16 3l-4-2.500v5z" fill="#30c040"/><path d="M2.500 3v10" stroke="#3060e8" stroke-width="1.800"/><path d="M2.500 16.500l-2.500-4h5z" fill="#3060e8"/><text x="6" y="15.500" font-family="Liberation Serif,serif" font-size="10.500" fill="#222">X</text></svg>
<svg class="ic" style="left:790px;top:86px" width="17" height="17" viewBox="0 0 17 17"><path d="M3 3h11" stroke="#e8304a" stroke-width="1.800"/><path d="M0 3l4-2.500v5z" fill="#e8304a"/><path d="M13.500 3v10" stroke="#3060e8" stroke-width="1.800"/><path d="M13.500 16.500l-2.500-4h5z" fill="#3060e8"/><rect x="12" y="1.500" width="3" height="3" fill="#30c040"/><text x="2" y="15.500" font-family="Liberation Serif,serif" font-size="10.500" fill="#222">Y</text></svg>
<svg class="ic" style="left:812px;top:86px" width="17" height="17" viewBox="0 0 17 17"><rect x="1" y="1.500" width="3" height="3" fill="#3060e8"/><path d="M2 3h11" stroke="#e8304a" stroke-width="1.800"/><path d="M16 3l-4-2.500v5z" fill="#e8304a"/><path d="M2.500 3v10" stroke="#30c040" stroke-width="1.800"/><path d="M2.500 16.500l-2.500-4h5z" fill="#30c040"/><text x="7" y="15.500" font-family="Liberation Serif,serif" font-size="10.500" fill="#222">Z</text></svg>
<svg class="ic" style="left:835px;top:86px" width="17" height="17" viewBox="0 0 17 17"><circle cx="2.500" cy="2.500" r="2" fill="#30a040"/><path d="M3 3h10" stroke="#e8304a" stroke-width="1.800"/><path d="M16 3l-4-2.500v5z" fill="#e8304a"/><path d="M2.500 4v9" stroke="#3060e8" stroke-width="1.800"/><path d="M2.500 16.500l-2.500-4h5z" fill="#3060e8"/><text x="5" y="15.500" font-family="Liberation Sans,sans-serif" font-size="9" fill="#111">-Y</text></svg>
<i class="dd" style="left:857px;top:93px"></i>
<svg class="ic" style="left:870px;top:86px" width="17" height="17" viewBox="0 0 17 17"><rect x=".7" y=".7" width="7" height="6" fill="#f7ee70" stroke="#111" stroke-width="1.300"/><path d="M6 9.500l7-8 2 1.500-6.500 8.500z" fill="#8a8a8a" stroke="#333" stroke-width=".7"/><path d="M10 8c3 1 3.500 5 .5 6.500h-7.500c-1 0-1 1.500 0 1.500h11c1 0 1-1.500 0-1.500" fill="#555" stroke="#333" stroke-width=".6"/></svg>
<i class="dd" style="left:892px;top:93px"></i>
<i class="sep" style="left:903px;top:87px"></i>
<svg class="ic" style="left:913px;top:86px" width="17" height="17" viewBox="0 0 17 17"><path d="M2 3l8-2.500 5 2v9l-7 4-6-3z" fill="#f8f8f8" stroke="#c0c0c0" stroke-width=".9"/><path d="M2 3l6 2.500 7-3M8 5.500v10" stroke="#c8c8c8" stroke-width=".8" fill="none"/><path d="M6.500 11l6.500-7" stroke="#e8202a" stroke-width="1.500"/><rect x="5" y="9.8" width="2.6" height="2.6" fill="#e8001c" stroke="#9a0010" stroke-width=".5"/><rect x="12" y="2.5" width="2.6" height="2.6" fill="#e8001c" stroke="#9a0010" stroke-width=".5"/></svg>
<i class="dd" style="left:935px;top:93px"></i>
<svg class="ic" style="left:957px;top:86px" width="17" height="17" viewBox="0 0 17 17"><path d="M1.500 15l2.500-12c3 3 6 3 10-.5l-1.500 12.500" fill="none" stroke="#555" stroke-width="1.100"/><path d="M2 15l1-12h11v12" fill="none" stroke="#aaa" stroke-width=".7"/><circle cx="3.500" cy="3" r="1.500" fill="#e87878"/><circle cx="14" cy="2.500" r="1.500" fill="#e87878"/><path d="M0 16l1.500-2.500 1.500 2.500zM11 16l1.500-2.500 1.500 2.500z" fill="#30c040"/></svg>
<svg class="ic" style="left:980px;top:87px" width="17" height="17" viewBox="0 0 17 17"><path d="M1 5h4v-2h6v2h2c3 0 3 7 0 7h-10c-1 0-2-1-2-2z" fill="#c8c8c8" stroke="#8a8a8a" stroke-width=".8"/><rect x="2.500" y="3.500" width="4.500" height="2.500" fill="#e8e8e8" stroke="#999" stroke-width=".5"/><rect x="4" y="7.500" width="1.800" height="1.800" fill="#e8d020"/><rect x="6.500" y="7.500" width="1.800" height="1.800" fill="#4a5ae0"/><rect x="8.500" y="7.500" width="1.800" height="1.800" fill="#e83030"/><rect x="10.500" y="7.500" width="1.500" height="1.800" fill="#888"/></svg>
<i class="sep" style="left:1002px;top:87px"></i>
<svg class="ic" style="left:1010px;top:86px" width="17" height="17" viewBox="0 0 17 17"><path d="M4.500 .5h7M4.500 7.500h7M8 .5v7" stroke="#5a6ab0" stroke-width="1.300"/><path d="M0 11h16" stroke="#555" stroke-width="1"/><path d="M8 11l8-4.500v4.500z" fill="#f05058"/><path d="M8 11l-8 4.500v-4.500z" fill="#5868e0"/></svg>
<svg class="ic" style="left:1033px;top:86px" width="17" height="17" viewBox="0 0 17 17"><path d="M.5 5l8-4 6.500 7-8.500 6.500z" fill="#3a6ae0"/><path d="M1.500 5.500l7-3.500 5.500 6-7.500 5.500z" fill="#30c8d0"/><path d="M2.500 7l6-3.500 4.500 4.500-6.500 4.500z" fill="#40d050"/><path d="M3.500 9l5-3.500 3.500 3-5.500 4z" fill="#e8e030"/><path d="M4.500 11l4-3.500 2.500 1.500-4.500 3.800z" fill="#f08020"/><path d="M5.500 12.500l3-3 1.500 .5-3.500 3.500z" fill="#e82020"/></svg>
<svg class="ic" style="left:1055px;top:86px" width="17" height="17" viewBox="0 0 17 17"><path d="M1 3.500l8-3 6 2v10l-6 3.500-8-2.500z" fill="#4a6ad8" stroke="#3a3a5a" stroke-width=".7"/><ellipse cx="5.500" cy="9.500" rx="4" ry="5" fill="#30c8c8"/><ellipse cx="5.500" cy="9.500" rx="3" ry="3.800" fill="#70d840"/><ellipse cx="5.500" cy="9.500" rx="2" ry="2.600" fill="#f0d020"/><ellipse cx="5.500" cy="9.500" rx="1.100" ry="1.500" fill="#e83020"/><ellipse cx="12.500" cy="8" rx="2" ry="4" fill="#30c8c8"/><ellipse cx="12.500" cy="8" rx="1.200" ry="2.800" fill="#f0d020"/><ellipse cx="12.500" cy="8" rx=".6" ry="1.500" fill="#e83020"/><ellipse cx="8.500" cy="2" rx="3.500" ry="1" fill="#e8a020"/></svg>
<svg class="ic" style="left:1077px;top:86px" width="17" height="17" viewBox="0 0 17 17"><path d="M1 6c0-3 5-3 5 0l1.500 1.500v1h-9v-1z" fill="#88c8a0"/><circle cx="3" cy="3" r="2" fill="#88c8a0"/><path d="M16 4h-4M12 4l2.500-2M12 4l2.500 2" stroke="#40b050" stroke-width="1.600" fill="none"/><path d="M10 3.500l3-2.500v5z" fill="#40b050"/><path d="M4.500 16v-4h-2l3.500-4 3.500 4h-2v4z" fill="#40b850"/></svg>
<svg class="ic" style="left:1098px;top:86px" width="17" height="17" viewBox="0 0 17 17"><path d="M1 7l9-5c3-1.500 5-1 5.500-.5l-6.500 6.500-6 2z" fill="#a8b4c8" stroke="#6a7a9a" stroke-width=".6"/><path d="M1 7l3 1 -1 2-2.500-.5z" fill="#5a6478"/><path d="M0 12h16" stroke="#555" stroke-width="1"/><path d="M8 12l8-4.500v4.500z" fill="#f05058"/><path d="M8 12l-8 4.500v-4.500z" fill="#5868e0"/></svg>
<svg class="ic" style="left:1121px;top:86px" width="17" height="17" viewBox="0 0 17 17"><path d="M1 4l6 2M4 1.500l0 7M1.500 7.500l5-4.500" stroke="#e83040" stroke-width="1.500"/><polygon points="4.0,6.0 4.0,14.5 6.1,12.6 7.6,16.0 9.0,15.3 7.6,12.1 10.2,12.1" fill="#f4f4f4" stroke="#707070" stroke-width=".9" stroke-linejoin="round"/><path d="M10 1h6.500v4.500h-4l-2.500 1.500z" fill="#f7e860" stroke="#9a8a20" stroke-width=".7"/></svg>
<i class="dd" style="left:1144px;top:93px"></i>
<svg class="ic" style="left:1155px;top:86px" width="17" height="17" viewBox="0 0 17 17"><path d="M4.500 .5h7M4.500 7.500h7M8 .5v7" stroke="#5a6ab0" stroke-width="1.300"/><path d="M0 11.500h16" stroke="#555" stroke-width="1"/><path d="M0 11.500c2 5.500 6 5.500 8 0" fill="none" stroke="#5868e0" stroke-width="1.200"/><path d="M8 11.500c2-5.500 6-5.500 8 0" fill="none" stroke="#f05058" stroke-width="1.200"/></svg>
<svg class="ic" style="left:1177px;top:86px" width="17" height="17" viewBox="0 0 17 17"><rect x="0.5" y="0.5" width="6.500" height="6.500" fill="#e8e8ee" stroke="#8a8a9a" stroke-width=".8"/><path d="M1.0 1.7h5.500" stroke="#8898e8" stroke-width="1.300"/><path d="M1.5 4.0h4.500M1.5 5.7h4.500" stroke="#c0a0a8" stroke-width=".9"/><path d="M4.5 4.8h2" stroke="#e86070" stroke-width=".9"/><rect x="8.5" y="0.5" width="6.500" height="6.500" fill="#e8e8ee" stroke="#8a8a9a" stroke-width=".8"/><path d="M9.0 1.7h5.500" stroke="#8898e8" stroke-width="1.300"/><path d="M9.5 4.0h4.500M9.5 5.7h4.500" stroke="#c0a0a8" stroke-width=".9"/><path d="M12.5 4.8h2" stroke="#e86070" stroke-width=".9"/><rect x="0.5" y="8.5" width="6.500" height="6.500" fill="#e8e8ee" stroke="#8a8a9a" stroke-width=".8"/><path d="M1.0 9.7h5.500" stroke="#8898e8" stroke-width="1.300"/><path d="M1.5 12.0h4.500M1.5 13.7h4.500" stroke="#c0a0a8" stroke-width=".9"/><path d="M4.5 12.8h2" stroke="#e86070" stroke-width=".9"/><rect x="8.5" y="8.5" width="6.500" height="6.500" fill="#e8e8ee" stroke="#8a8a9a" stroke-width=".8"/><path d="M9.0 9.7h5.500" stroke="#8898e8" stroke-width="1.300"/><path d="M9.5 12.0h4.500M9.5 13.7h4.500" stroke="#c0a0a8" stroke-width=".9"/><path d="M12.5 12.8h2" stroke="#e86070" stroke-width=".9"/></svg>
<!--/TB-->
<div id="mdi" class="abs"></div>
<div id="mditop" class="abs"></div>
<div id="sidetab" class="abs"><span>Project Navigator - Data</span></div>

<!-- window 1 -->
<div id="win1" class="win" style="left:24px;top:109px;width:1174px;height:374px;background:#d6e4f2;border-left:2px solid #4a4a4a;border-top:1px solid #3e3e3e;border-bottom:2px solid #3c3c3c;border-right:1px solid #f2f5fa;border-radius:7px 7px 0 0">
  <div class="cap" style="background:linear-gradient(#b9c9dc,#c9d8e8 40%,#dbe8f5)"></div>
  <svg class="abs" style="left:9px;top:11px" width="16" height="13" viewBox="0 0 16 13"><rect width="16" height="13" fill="#1c1c64"/><path d="M0 9h16" stroke="#fff" stroke-width="2.200"/><path d="M6 1.500v11.500" stroke="#fff" stroke-width="2.200"/><path d="M6 2l-6 6.500" stroke="#fff" stroke-width="1.700"/><path d="M7 2l9 5M8 4l7.500 4" stroke="#fff" stroke-width="1.100"/></svg><div class="wtitle" style="color:#9a9fab">00935-model-file</div>
  <div class="cbtn" style="left:1064px"><svg width="29" height="16" viewBox="0 0 29 16"><rect x="9.500" y="8.500" width="11" height="3.500" rx="1" fill="#fff" stroke="#50545e" stroke-width="1"/></svg></div>
  <div class="cbtn" style="left:1097px"><svg width="29" height="16" viewBox="0 0 29 16"><rect x="9.500" y="3.500" width="11" height="9" rx="1" fill="#fff" stroke="#50545e" stroke-width="1"/><rect x="12.500" y="6.500" width="5" height="3" fill="#c8d4e6" stroke="#50545e" stroke-width="1"/></svg></div>
  <div class="cbtn" style="left:1131px"><svg width="29" height="16" viewBox="0 0 29 16"><path d="M10.500 4.500L18.500 11.500M18.500 4.500L10.500 11.500" stroke="#50545e" stroke-width="4.600" stroke-linecap="round"/><path d="M10.500 4.500L18.500 11.500M18.500 4.500L10.500 11.500" stroke="#fff" stroke-width="2.600" stroke-linecap="round"/></svg></div>
  <div class="client" id="c1" style="left:7px;top:30px;width:1158px;height:335px">
    <svg class="abs" style="left:0;top:0" width="1154" height="332" viewBox="35 142 1154 332"><polygon points="193.8,208.7 245.5,181.3 350.8,195.0 350.8,236.0 249.5,223.2 193.8,252.2" fill="#c6cad3"/><g stroke="#d6cfd0" stroke-width="0.8" fill="none"><polyline points="193.8,208.7 245.5,181.3 350.8,195.0 298.8,222.0 193.8,208.7"/><line x1="298.8" y1="222.0" x2="298.8" y2="240"/><line x1="245.5" y1="181.3" x2="245.5" y2="225"/></g><polygon points="43.7,330.5 295.3,362.0 295.3,384.6 43.2,353.2" fill="#c9cdcd"/><polygon points="295.3,362.0 501.8,255.0 501.8,277.5 295.3,384.6" fill="#cdd0d0"/><g stroke="#d8cfcf" stroke-width="0.8"><line x1="295.3" y1="362.0" x2="295.3" y2="384.6"/><line x1="43.2" y1="353.2" x2="43.2" y2="330.5"/><line x1="501.8" y1="277.5" x2="501.8" y2="255.0"/></g><polygon points="43.7,330.5 249.5,223.2 501.8,255.0 295.3,362.0" fill="#4668b0" stroke="#101018" stroke-width="0.9" stroke-linejoin="round"/><g fill="#d8c8c8"><circle cx="193.8" cy="208.7" r="1.4"/><circle cx="245.5" cy="181.3" r="1.4"/><circle cx="350.8" cy="195.0" r="1.4"/><circle cx="298.8" cy="222.0" r="1.4"/><circle cx="43.2" cy="353.2" r="1.4"/><circle cx="295.3" cy="384.6" r="1.4"/><circle cx="501.8" cy="277.5" r="1.4"/></g><g fill="#7a1020"><circle cx="43.7" cy="330.5" r="1.6"/><circle cx="249.5" cy="223.2" r="1.6"/><circle cx="501.8" cy="255.0" r="1.6"/><circle cx="295.3" cy="362.0" r="1.6"/></g><polygon points="245.5,272.5 350.8,285.5 299.3,312.5 194.3,299.3" fill="none" stroke="#d85a8c" stroke-width="1.1"/><polygon points="245.5,272.5 350.8,285.5 299.3,312.5 194.3,299.3" fill="none" stroke="#ff0818" stroke-width="1.2" stroke-dasharray="3.5 4"/><g fill="#ff1030"><circle cx="245.5" cy="272.5" r="1.8"/><circle cx="350.8" cy="285.5" r="1.8"/><circle cx="299.3" cy="312.5" r="1.8"/><circle cx="194.3" cy="299.3" r="1.8"/></g><rect x="262.5" y="280.8" width="20" height="23.6" fill="#fff"/><text x="264.8" y="298.9" font-family="Liberation Sans, sans-serif" font-weight="bold" font-size="15" textLength="13.2" lengthAdjust="spacingAndGlyphs" fill="#8e8e96">S1</text></svg><div class="vis" style="left:6px;top:6px">Visibility mode</div>
  </div>
</div>
<!-- window 2 -->
<div id="win2" class="win" style="left:24px;top:483px;width:1174px;height:374px;background:#b9d1ea;border-left:2px solid #1a1a1a;border-top:1px solid #2a2a2a;border-bottom:1px solid #000;border-right:1px solid #3cc8f5;border-radius:7px 7px 0 0;box-shadow:inset 0 -1px 0 #3cc8f5">
  <div class="cap" style="background:linear-gradient(#9bb3cf,#b0c8e3 50%,#c3d8ef)"></div>
  <svg class="abs" style="left:9px;top:11px" width="16" height="13" viewBox="0 0 16 13"><rect width="16" height="13" fill="#1c1c64"/><path d="M0 9h16" stroke="#fff" stroke-width="2.200"/><path d="M6 1.500v11.500" stroke="#fff" stroke-width="2.200"/><path d="M6 2l-6 6.500" stroke="#fff" stroke-width="1.700"/><path d="M7 2l9 5M8 4l7.500 4" stroke="#fff" stroke-width="1.100"/></svg><div class="wtitle" style="color:#111">00935-model-file</div>
  <div class="client" id="c2" style="left:7px;top:30px;width:1158px;height:335px">
    <svg class="abs" style="left:0;top:0" width="1154" height="332" viewBox="35 516 1154 332"><polygon points="44.1,711.5 210.0,626.7 210.0,650.7 44.1,736.5" fill="#c3c7d0"/><polygon points="44.1,711.5 82.0,718.5 44.1,736.5" fill="#cfd3d3"/><polygon points="210.0,578.1 266.3,548.5 382.0,563.2 382.0,633.1 270.8,619.2 210.0,650.7" fill="#c6cad3"/><polygon points="210.0,578.1 325.5,592.5 325.5,626.0 270.8,619.2 210.0,650.7" fill="#cdd1d7"/><polygon points="382.0,608.0 547.9,628.0 547.9,653.9 382.0,633.1" fill="#c3c7d0"/><polygon points="547.9,628.0 547.9,653.9 512.7,649.5" fill="#cfd3d0"/><g stroke="#d6cfd0" stroke-width="0.8" fill="none"><polyline points="210.0,578.1 266.3,548.5 382.0,563.2 325.5,592.5 210.0,578.1"/><line x1="325.5" y1="592.5" x2="325.5" y2="626"/><line x1="266.3" y1="548.5" x2="266.3" y2="586" stroke-dasharray="3 2"/><line x1="210.0" y1="578.1" x2="210.0" y2="650.7"/><line x1="44.1" y1="711.5" x2="44.1" y2="736.5"/><line x1="44.1" y1="711.5" x2="82" y2="718.5"/><line x1="547.9" y1="628.0" x2="547.9" y2="653.9"/><line x1="547.9" y1="628.0" x2="512.7" y2="649.5"/></g><polygon points="44.1,736.5 270.8,619.2 547.9,653.9 320.9,771.2" fill="#4668b0" stroke="#101018" stroke-width="0.9" stroke-linejoin="round"/><g fill="#d8c8c8"><circle cx="210.0" cy="578.1" r="1.4"/><circle cx="266.3" cy="548.5" r="1.4"/><circle cx="382.0" cy="563.2" r="1.4"/><circle cx="325.5" cy="592.5" r="1.4"/><circle cx="44.1" cy="711.5" r="1.4"/><circle cx="547.9" cy="628.0" r="1.4"/></g><g fill="#8a1020"><circle cx="44.1" cy="736.5" r="1.6"/><circle cx="270.8" cy="619.2" r="1.6"/><circle cx="547.9" cy="653.9" r="1.6"/><circle cx="320.9" cy="771.2" r="1.6"/></g><rect x="286" y="683.2" width="20" height="24" fill="#fff"/><text x="288.6" y="701.6" font-family="Liberation Sans, sans-serif" font-weight="bold" font-size="15" textLength="13.8" lengthAdjust="spacingAndGlyphs" fill="#8e8e96">S2</text></svg><div class="vis" style="left:5px;top:6px">Visibility mode</div>
  </div>
</div>

<div class="abs" style="left:23px;top:857px;width:1177px;height:2px;background:#fafbfd"></div>
<div id="btab" class="abs"><span>1.5 Solids</span></div>
<div id="statusbar" class="abs"></div>
<div class="stx" style="left:4px;transform:scaleX(.905)">Workplane</div>
<div class="sb" style="left:438px;width:34px"><span style="transform:scaleX(.83)">SNAP</span></div>
<div class="abs" style="left:473px;top:881px;width:36px;height:19px;background:linear-gradient(#e2e5ec,#d0d4dd 50%,#c4c9d4);border-right:1px solid #8a8e9a"><span class="abs" style="left:2px;top:2px;font-size:12px;line-height:13px;color:#26262e;transform-origin:0 0;transform:scaleX(.9);white-space:pre">GRID</span></div>
<div class="sb" style="left:511px;width:50px"><span style="transform:scaleX(.87)">CARTES</span></div>
<div class="sb" style="left:562px;width:45px"><span style="transform:scaleX(.86)">OSNAP</span></div>
<div class="sb" style="left:608px;width:45px"><span style="transform:scaleX(.865)">GLINES</span></div>
<div class="sb" style="left:655px;width:29px"><span style="transform:scaleX(.9)">DXF</span></div>
<div class="stx" style="left:686px;transform:scaleX(.858)">Visibility Mode</div>
<div class="stx" style="left:786px;transform:scaleX(.877)">CS: Global XYZ</div>
<i class="ssep" style="left:873px"></i>
<div class="stx" style="left:876px;transform:scaleX(.862)">Plane: XY</div>
<i class="ssep" style="left:960px"></i>
<div class="stx" style="left:964px;transform:scaleX(.845)">X:  689.7 mm</div>
<i class="ssep" style="left:1035px"></i>
<div class="stx" style="left:1038px;transform:scaleX(.852)">Y:  89.2 mm</div>
<i class="ssep" style="left:1109px"></i>
<div class="stx" style="left:1111px;transform:scaleX(.853)">Z:  0.0 mm</div>
<svg class="abs" style="left:1187px;top:888px" width="13" height="12" viewBox="0 0 13 12"><g fill="#7c818e"><rect x="10" y="1" width="2" height="2"/><rect x="7" y="4" width="2" height="2"/><rect x="10" y="4" width="2" height="2"/><rect x="4" y="7" width="2" height="2"/><rect x="7" y="7" width="2" height="2"/><rect x="10" y="7" width="2" height="2"/><rect x="1" y="10" width="2" height="2"/><rect x="4" y="10" width="2" height="2"/><rect x="7" y="10" width="2" height="2"/><rect x="10" y="10" width="2" height="2"/></g></svg>

<!-- dialog -->
<div id="dlg" class="abs">
  <div class="dtitle"><span>Edit Solid</span>
    <svg class="abs" style="left:624px;top:7px" width="10" height="10" viewBox="0 0 10 10"><path d="M0 0L10 10M10 0L0 10" stroke="#111" stroke-width="1.1" fill="none"/></svg>
  </div>
  <div class="tab" style="left:8px;width:48px;letter-spacing:-.3px">General</div>
  <div class="tab act" style="left:55px;width:53px;letter-spacing:-.1px">Contact</div>
  <div class="tab" style="left:107px;width:53px;letter-spacing:-.4px">FE Mesh</div>
  <div class="tab" style="left:159px;width:38px;letter-spacing:-.4px">Axes</div>
  <div id="tabpanel">
    <!-- coordinates inside tabpanel: origin page (563,254) -->
    <div class="grp" style="left:8px;top:9px;height:46px"><div class="gh"><span style="letter-spacing:-.4px">Solid No.</span></div><div class="gb"></div>
      <div class="inp" style="left:3px;top:20px;width:312px;height:20px">1</div>
    </div>
    <div class="grp" style="left:8px;top:64px;height:80px"><div class="gh"><span style="letter-spacing:.07px">Contact Between Two Surfaces</span></div><div class="gb"></div>
      <div class="lbl" style="left:3px;top:26px;letter-spacing:-.15px">Surface A:</div>
      <div class="abs" style="left:75px;top:22px;width:60px;height:21px;border:1px solid #0078d7;background:#fff">
        <span class="abs" style="left:2px;top:2px;width:7px;height:15px;background:#0078d7;color:#fff;font-size:11px;line-height:15px;text-align:center">2</span>
        <svg class="abs" style="left:45px;top:7px" width="10" height="6" viewBox="0 0 10 6"><path d="M.5 .5L5 5L9.5 .5" stroke="#444" stroke-width="1" fill="none"/></svg>
      </div>
      <div class="btn" style="left:139px;top:22px;width:25px;height:21px">
        <svg width="23" height="19" viewBox="0 0 23 19"><path d="M9 5l1 10 2-2.5 2 4 1.6-.8-2-4 3-.3z" fill="#fff" stroke="#222" stroke-width="1"/><path d="M6 2l5 4M10 1.500L7 6.500" stroke="#d8232a" stroke-width="1.6"/></svg>
      </div>
      <div class="lbl" style="left:3px;top:53px;letter-spacing:-.2px">Surface B:</div>
      <div class="inp" style="left:75px;top:49px;width:44px;height:20px">1</div>
    </div>
    <div class="grp" style="left:8px;top:154px;height:84px"><div class="gh"><span style="letter-spacing:-.08px">Contact Perpendicular to Surfaces</span></div><div class="gb"></div>
      <div class="combo" style="left:3px;top:19px;width:312px;height:21px;letter-spacing:-.3px;line-height:20px">Failure under compression
        <svg class="abs" style="left:296px;top:7px" width="10" height="6" viewBox="0 0 10 6"><path d="M.5 .5L5 5L9.5 .5" stroke="#444" stroke-width="1" fill="none"/></svg>
      </div>
    </div>
    <div class="grp" style="left:8px;top:248px;height:171px"><div class="gh"><span style="letter-spacing:-.1px">Contact Parallel to Surfaces</span></div><div class="gb"></div>
      <div class="combo" style="left:3px;top:20px;width:312px;height:21px;letter-spacing:-.17px;line-height:20px">Failure if contact perpendicular to surfaces failed
        <svg class="abs" style="left:296px;top:7px" width="10" height="6" viewBox="0 0 10 6"><path d="M.5 .5L5 5L9.5 .5" stroke="#444" stroke-width="1" fill="none"/></svg>
      </div>
      <div class="lbl" style="left:3px;top:53px;letter-spacing:-.4px">Parameters:</div>
      <div class="lbl" style="left:3px;top:74px;color:#9a9a9a">C:</div>
      <div class="spin" style="left:37px;top:70px"><b class="ud"></b><b class="rt"></b></div>
      <div class="lbl" style="left:136px;top:74px;color:#222">[kN/m<sup>3</sup>&thinsp;]</div>
      <div class="lbl" style="left:3px;top:99px;color:#9a9a9a">&micro;:</div>
      <div class="spin" style="left:37px;top:94px"><b class="ud"></b><b class="rt"></b></div>
      <div class="lbl" style="left:136px;top:99px;color:#222">[kN/m<sup>2</sup>&thinsp;]</div>
    </div>
    <div class="pic" id="pic1" style="left:335px;top:9px;width:286px;height:228px"><svg class="abs" style="left:0;top:0" width="285" height="227" viewBox="899 264 285 227"><defs><clipPath id="cpA"><polygon points="988.7,331.9 1058.6,291.5 1058.6,395.0 988.7,436.1"/></clipPath><clipPath id="cpB"><polygon points="1040.4,345.6 1110.3,305.3 1110.3,409.3 1040.4,450.0"/></clipPath></defs><polygon points="996.7,334.4 1066.7,293.4 1066.7,397.8 996.7,438.8" fill="#f1f1f1" stroke="#2b2b2b" stroke-width="0.9" stroke-linejoin="round"/><polygon points="980.7,329.5 1050.7,289.1 1066.7,293.4 996.7,334.4" fill="#ececec" stroke="#2b2b2b" stroke-width="0.9" stroke-linejoin="round"/><polygon points="980.7,329.5 996.7,334.4 996.7,438.8 980.7,434.6" fill="#e4e6e6" stroke="#2b2b2b" stroke-width="0.9" stroke-linejoin="round"/><polygon points="1048.7,347.4 1118.7,307.2 1118.7,412.2 1048.7,452.8" fill="#f1f1f1" stroke="#2b2b2b" stroke-width="0.9" stroke-linejoin="round"/><polygon points="1032.4,342.7 1102.4,302.4 1118.7,307.2 1048.7,347.4" fill="#ececec" stroke="#2b2b2b" stroke-width="0.9" stroke-linejoin="round"/><polygon points="1032.4,342.7 1048.7,347.4 1048.7,452.8 1032.4,448.6" fill="#e4e6e6" stroke="#2b2b2b" stroke-width="0.9" stroke-linejoin="round"/><g clip-path="url(#cpA)" stroke="#111" stroke-width="0.95"><line x1="980" y1="228.6" x2="1070" y2="316.8"/><line x1="980" y1="240.8" x2="1070" y2="329.0"/><line x1="980" y1="253.0" x2="1070" y2="341.2"/><line x1="980" y1="265.2" x2="1070" y2="353.4"/><line x1="980" y1="277.4" x2="1070" y2="365.6"/><line x1="980" y1="289.6" x2="1070" y2="377.8"/><line x1="980" y1="301.8" x2="1070" y2="390.0"/><line x1="980" y1="314.0" x2="1070" y2="402.2"/><line x1="980" y1="326.2" x2="1070" y2="414.4"/><line x1="980" y1="338.4" x2="1070" y2="426.6"/><line x1="980" y1="350.6" x2="1070" y2="438.8"/><line x1="980" y1="362.8" x2="1070" y2="451.0"/><line x1="980" y1="375.0" x2="1070" y2="463.2"/><line x1="980" y1="387.2" x2="1070" y2="475.4"/><line x1="980" y1="399.4" x2="1070" y2="487.6"/><line x1="980" y1="411.6" x2="1070" y2="499.8"/><line x1="980" y1="423.8" x2="1070" y2="512.0"/><line x1="980" y1="436.0" x2="1070" y2="524.2"/><line x1="980" y1="448.2" x2="1070" y2="536.4"/><line x1="980" y1="460.4" x2="1070" y2="548.6"/><line x1="980" y1="472.6" x2="1070" y2="560.8"/><line x1="980" y1="484.8" x2="1070" y2="573.0"/></g><g clip-path="url(#cpB)" stroke="#111" stroke-width="0.95"><line x1="1019.6" y1="460" x2="1082.6" y2="290"/><line x1="1028.5" y1="460" x2="1091.5" y2="290"/><line x1="1037.4" y1="460" x2="1100.4" y2="290"/><line x1="1046.3" y1="460" x2="1109.3" y2="290"/><line x1="1055.2" y1="460" x2="1118.2" y2="290"/><line x1="1064.1" y1="460" x2="1127.1" y2="290"/><line x1="1073.0" y1="460" x2="1136.0" y2="290"/><line x1="1081.9" y1="460" x2="1144.9" y2="290"/><line x1="1090.8" y1="460" x2="1153.8" y2="290"/><line x1="1099.7" y1="460" x2="1162.7" y2="290"/><line x1="1108.6" y1="460" x2="1171.6" y2="290"/><line x1="1117.5" y1="460" x2="1180.5" y2="290"/><line x1="1126.4" y1="460" x2="1189.4" y2="290"/><line x1="1135.3" y1="460" x2="1198.3" y2="290"/><line x1="1144.2" y1="460" x2="1207.2" y2="290"/><line x1="1153.1" y1="460" x2="1216.1" y2="290"/><line x1="1162.0" y1="460" x2="1225.0" y2="290"/><line x1="1170.9" y1="460" x2="1233.9" y2="290"/></g><g stroke="#f0861e" stroke-width="2.8" stroke-dasharray="5.4 2.4" fill="none"><line x1="988.7" y1="331.9" x2="1058.6" y2="291.5"/><line x1="1058.6" y1="291.5" x2="1110.3" y2="305.3"/><line x1="1110.3" y1="305.3" x2="1040.4" y2="345.6"/><line x1="1040.4" y1="345.6" x2="988.7" y2="331.9"/><line x1="988.7" y1="436.1" x2="1058.6" y2="395.0"/><line x1="1058.6" y1="395.0" x2="1110.3" y2="409.3"/><line x1="1110.3" y1="409.3" x2="1040.4" y2="450.0"/><line x1="1040.4" y1="450.0" x2="988.7" y2="436.1"/><line x1="988.7" y1="331.9" x2="988.7" y2="436.1"/><line x1="1058.6" y1="291.5" x2="1058.6" y2="395.0"/><line x1="1110.3" y1="305.3" x2="1110.3" y2="409.3"/><line x1="1040.4" y1="345.6" x2="1040.4" y2="450.0"/></g><g fill="#e8202a"><rect x="986.0" y="329.2" width="5.4" height="5.4"/><rect x="1055.9" y="288.8" width="5.4" height="5.4"/><rect x="1107.6" y="302.6" width="5.4" height="5.4"/><rect x="1037.7" y="342.9" width="5.4" height="5.4"/><rect x="986.0" y="433.4" width="5.4" height="5.4"/><rect x="1055.9" y="392.3" width="5.4" height="5.4"/><rect x="1107.6" y="406.6" width="5.4" height="5.4"/><rect x="1037.7" y="447.3" width="5.4" height="5.4"/></g><g stroke="#333" stroke-width="0.9" fill="none"><polyline points="993.2,304.3 1000.8,304.3 1022.8,326.6"/><polyline points="1098.5,444 1092.6,444 1070.6,417.8"/><polyline points="1036.5,466 1030.2,466 1008.7,441.9"/></g><g fill="#222"><circle cx="1022.9" cy="326.9" r="1.2"/><circle cx="1070.6" cy="417.7" r="1.2"/><circle cx="1008.7" cy="441.8" r="1.4"/></g><g font-family="Liberation Sans, sans-serif" font-size="11" fill="#222"><text x="942" y="308.2">Surface A</text><text x="1102.4" y="447.2">Surface B</text><text x="1040.5" y="470">Edges of solid</text></g></svg></div>
    <div class="pic" id="pic2" style="left:335px;top:248px;width:286px;height:170px"><svg class="abs" style="left:0;top:0" width="285" height="169" viewBox="899 503 285 169"><rect x="927.2" y="539.6" width="7.4" height="95.3" fill="#e9e9ea"/><rect x="963.5" y="539.6" width="6.2" height="95.3" fill="#e9e9ea"/><rect x="934.6" y="539.6" width="28.9" height="95.3" fill="#eef0ea"/><g stroke-linecap="butt"><line x1="927.6" y1="539.6" x2="927.6" y2="634.9" stroke="#7a7a7a" stroke-width="1.6"/><line x1="934.6" y1="539.6" x2="934.6" y2="634.9" stroke="#3a3a3a" stroke-width="0.9"/><line x1="963.6" y1="539.6" x2="963.6" y2="634.9" stroke="#2a2a2a" stroke-width="1.1"/><line x1="969.4" y1="539.6" x2="969.4" y2="634.9" stroke="#8a8a8a" stroke-width="1.2"/></g><rect x="930.7" y="539.9" width="35.9" height="94.7" fill="none" stroke="#f0861e" stroke-width="1.8" stroke-dasharray="3.2 1.9"/><g fill="#e8202a"><rect x="927.8" y="537.0" width="5.8" height="5.8"/><rect x="963.7" y="537.0" width="5.8" height="5.8"/><rect x="927.8" y="631.7" width="5.8" height="5.8"/><rect x="963.7" y="631.7" width="5.8" height="5.8"/></g><g stroke="#555" stroke-width="1.2" fill="#555"><line x1="945.4" y1="571.3" x2="945.4" y2="596"/><line x1="951.9" y1="580" x2="951.9" y2="604.5"/></g><g fill="#555"><polygon points="941.1,595.9 949.7,595.9 945.4,604.3"/><polygon points="947.6,580 956.2,580 951.9,571.6"/></g><text x="954.6" y="592.3" font-family="Liberation Serif, serif" font-size="14" fill="#444">&#964;</text><line x1="1061.8" y1="564" x2="1061.8" y2="631" stroke="#2a1a10" stroke-width="1.7"/><line x1="1061.8" y1="554" x2="1061.8" y2="564" stroke="#ef8420" stroke-width="1.7"/><line x1="1061" y1="630" x2="1141" y2="630" stroke="#ef8420" stroke-width="2"/><g fill="#ef8420"><polygon points="1056.3,555 1067.3,555 1061.8,545"/><polygon points="1140.6,624.5 1140.6,635.5 1151,630"/></g><g font-family="Liberation Serif, serif" fill="#ef8420"><text x="1034.5" y="552.8" font-size="15" letter-spacing="1">|&#964;|</text><text x="1141.6" y="651" font-size="15">&#948;</text></g></svg></div>
  </div>
  <div class="btn" style="left:7px;top:490px;width:25px;height:21px" id="ib1"><svg class="abs" style="left:3px;top:1px" width="18" height="18" viewBox="0 0 18 18"><path d="M9 1.500c4.500 0 7.500 2.600 7.500 6s-3 6-7.500 6c-1 0-2-.2-3-.5l-3.500 2.500 1-3.500c-1.500-1.100-2.200-2.700-2.200-4.500 0-3.400 3.200-6 7.700-6z" fill="#f4f4f6" stroke="#a8a8b0" stroke-width=".9"/><text x="9" y="12" text-anchor="middle" font-family="Liberation Sans,sans-serif" font-weight="bold" font-size="12" fill="#2a3a9a">?</text></svg></div>
  <div class="btn" style="left:42px;top:490px;width:25px;height:21px" id="ib2"><svg class="abs" style="left:3px;top:1px" width="18" height="18" viewBox="0 0 18 18"><path d="M1.500 1.500h8l3 3v12h-11z" fill="#fafafa" stroke="#444" stroke-width="1"/><path d="M3.500 7h6M3.500 9.500h5M3.500 12h4M3.500 14.500h7" stroke="#555" stroke-width=".9"/><path d="M6.500 12.500l1-3 7-8 2 1.800-7 8z" fill="#f2c818" stroke="#7a5a10" stroke-width=".7"/><path d="M14.500 1.500l2 1.800-1.200 1.400-2-1.800z" fill="#f0a0c0"/><path d="M6.500 12.500l1-3 2 1.800z" fill="#222"/></svg></div>
  <div class="btn" style="left:77px;top:490px;width:25px;height:21px" id="ib3"><svg class="abs" style="left:3px;top:1px" width="18" height="18" viewBox="0 0 18 18"><rect x="1" y="1" width="16" height="4" fill="#58b848" stroke="#3a8a30" stroke-width=".6"/><path d="M3 1v2M5 1v2M7 1v2M9 1v2M11 1v2M13 1v2M15 1v2" stroke="#2a6a20" stroke-width=".6"/><text x=".5" y="14" font-family="Liberation Serif,serif" font-style="italic" font-weight="bold" font-size="10.500" fill="#111">0.</text><text x="8" y="14" font-family="Liberation Serif,serif" font-style="italic" font-weight="bold" font-size="10.500" fill="#2a3a8a">00</text><path d="M7.500 15.500h9" stroke="#2a3a8a" stroke-width="1"/></svg></div>
  <div class="btn" style="left:112px;top:490px;width:25px;height:21px" id="ib4"><svg class="abs" style="left:3px;top:1px" width="18" height="18" viewBox="0 0 18 18"><rect x="1.500" y="7.500" width="7" height="9" fill="#f4f4f4" stroke="#555" stroke-width=".9"/><path d="M3 10h4M3 12h4M3 14h4" stroke="#555" stroke-width=".8"/><path d="M6 3l8 2M10.500 .5l-1 7M7 6.500l6-5" stroke="#e03048" stroke-width="1.500"/><polygon points="9.5,5.0 9.5,14.5 11.8,12.4 13.5,16.0 15.1,15.3 13.5,11.7 16.3,11.7" fill="#f4f4f4" stroke="#707070" stroke-width=".9" stroke-linejoin="round"/></svg></div>
  <div class="btn" style="left:481px;top:490px;width:73px;height:21px;border:2px solid #0078d7;line-height:16px;font-size:11px">OK</div>
  <div class="btn" style="left:564px;top:490px;width:73px;height:21px;line-height:18px;font-size:11px">Cancel</div>
</div>
</body>
</html>
